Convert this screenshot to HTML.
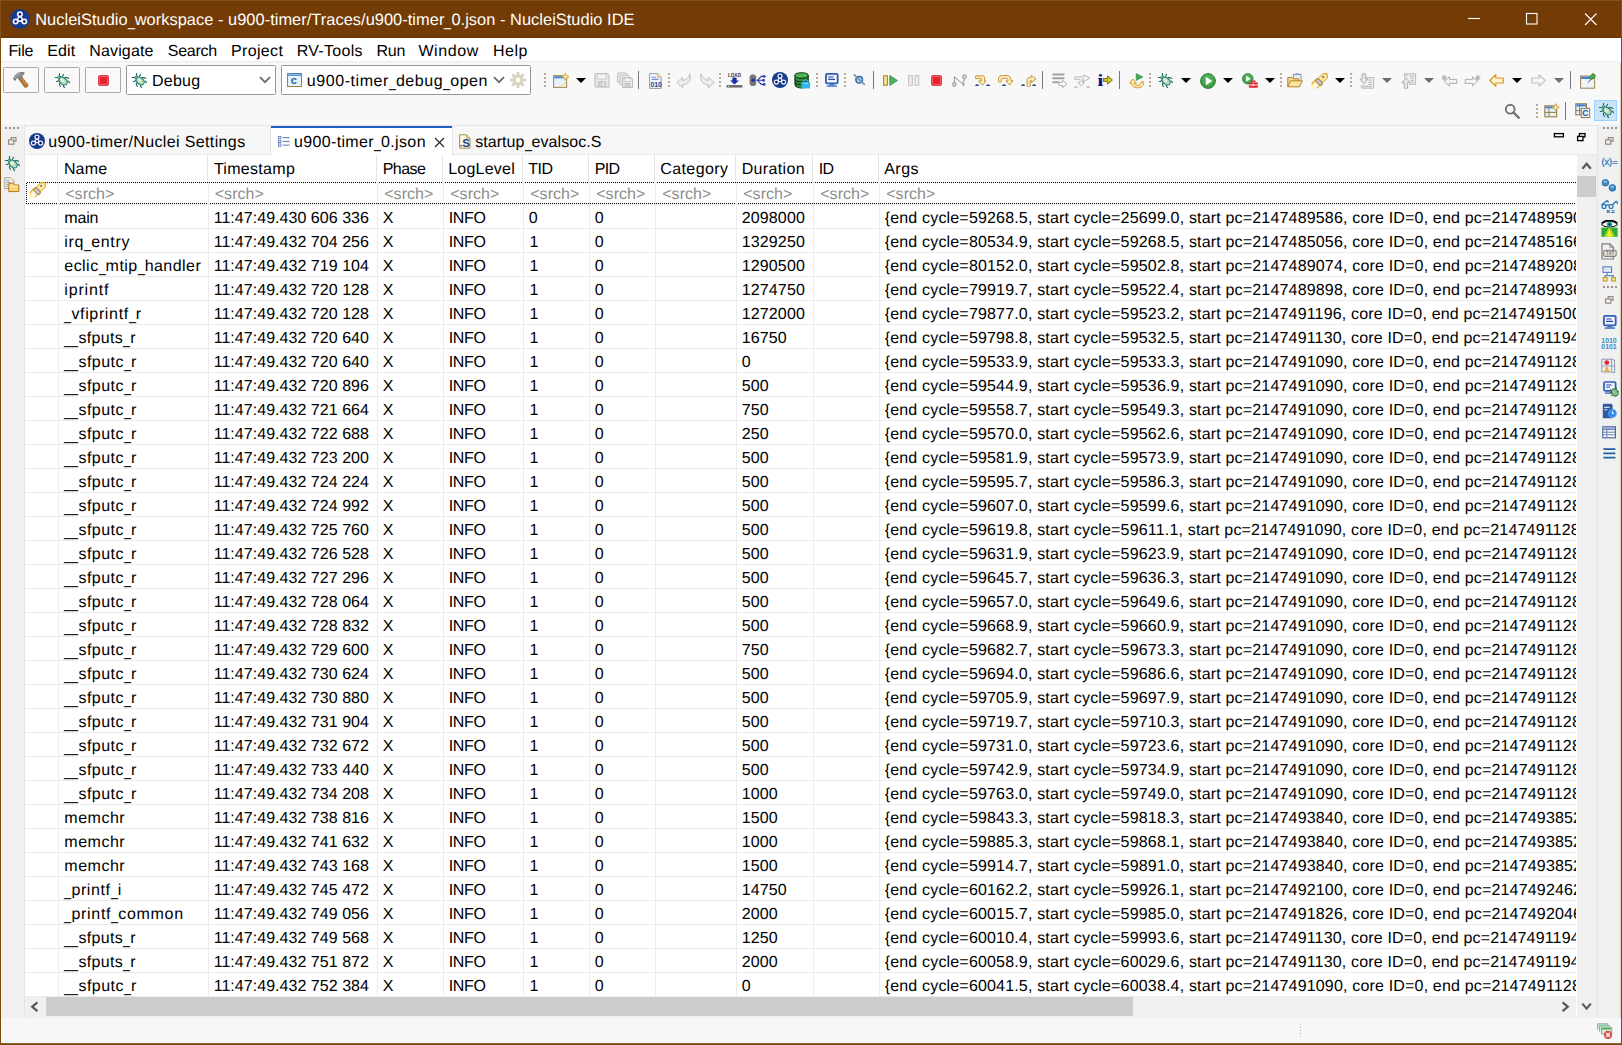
<!DOCTYPE html>
<html lang="en"><head><meta charset="utf-8"><title>NucleiStudio IDE</title>
<style>
html,body{margin:0;padding:0}
body{width:1622px;height:1045px;overflow:hidden;background:#7c4913;position:relative;
 font-family:"Liberation Sans",sans-serif;font-size:16px;color:#000}
div,span,svg{position:absolute;box-sizing:border-box}
.t{white-space:pre;line-height:24px;height:24px;font-size:16.0px;text-rendering:geometricPrecision}
.u{position:static;display:inline-block;letter-spacing:0;white-space:pre;transform-origin:0 0}
.w{color:#fff}
.g{color:#8d8d8d}
.row{left:25px;width:1551px;height:24px;overflow:hidden;border-bottom:1px solid #ececec}
.vl{top:0;width:1px;height:24px;background:#ececec}
.hs{top:155px;width:1px;height:26px;background:#e5e5e5}
.dd{width:0;height:0;border-left:5px solid transparent;border-right:5px solid transparent;border-top:5px solid #000}
.ddg{border-top-color:#6d6d6d}
.sepd{width:2px;height:15px;background:repeating-linear-gradient(180deg,#b8ac9a 0 2px,transparent 2px 4px)}
.sepl{width:1px;height:18px;background:#787878}
.btn{border:1px solid #a9a9a9;border-radius:1.5px;background:#f9f9f9}
.combo{border:1px solid #979797;border-radius:1.5px;background:#fff}
</style></head><body>

<div style="left:0;top:0;width:1622px;height:38px;background:#80521e"></div>
<div style="left:1px;top:1px;width:1620px;height:37px;background:#733c06"></div>
<div style="left:1px;top:38px;width:1620px;height:1006px;background:#f8f8f8"></div>
<div style="left:1px;top:37px;width:1620px;height:1px;background:#6b3504"></div>
<div style="left:1620px;top:38px;width:1px;height:1006px;background:#dccfc2"></div>
<div style="left:1px;top:1043px;width:1620px;height:1px;background:#8d6136"></div>
<span class="t w" style="left:35.2px;top:8.0px;letter-spacing:0.038px;font-size:16.4px;">NucleiStudio<span class="u" style="width:7.0px;transform:translateY(1.2px) scaleX(0.7671)">_</span>workspace - u900-timer/Traces/u900-timer<span class="u" style="width:7.0px;transform:translateY(1.2px) scaleX(0.7671)">_</span>0.json - NucleiStudio IDE</span>
<svg style="left:1460px;top:0" width="162" height="38" viewBox="0 0 162 38" fill="none" stroke="#fff" stroke-width="1.1"><path d="M8 18.5H20"/><rect x="66.5" y="13.5" width="10.5" height="10.5"/><path d="M125 13.5L136.5 25M136.5 13.5L125 25"/></svg>
<div style="left:1px;top:38px;width:1620px;height:23px;background:#fff"></div>
<div style="left:1px;top:61px;width:1620px;height:1px;background:#efefef"></div>
<div style="left:1px;top:62px;width:1620px;height:1px;background:#f4f4f4"></div>
<span class="t" style="left:8.4px;top:40.0px;letter-spacing:-0.295px;">File</span>
<span class="t" style="left:47.2px;top:40.0px;letter-spacing:0.18px;">Edit</span>
<span class="t" style="left:89.2px;top:40.0px;letter-spacing:0.168px;">Navigate</span>
<span class="t" style="left:167.7px;top:40.0px;letter-spacing:-0.234px;">Search</span>
<span class="t" style="left:231.0px;top:40.0px;letter-spacing:0.343px;">Project</span>
<span class="t" style="left:296.7px;top:40.0px;letter-spacing:0.308px;">RV-Tools</span>
<span class="t" style="left:376.6px;top:40.0px;letter-spacing:-0.32px;">Run</span>
<span class="t" style="left:418.4px;top:40.0px;letter-spacing:0.599px;">Window</span>
<span class="t" style="left:493.0px;top:40.0px;letter-spacing:0.498px;">Help</span>
<div class="btn" style="left:3px;top:67px;width:36px;height:26px"></div>
<div class="btn" style="left:44px;top:67px;width:36px;height:26px"></div>
<div class="btn" style="left:85px;top:67px;width:36px;height:26px"></div>
<div class="combo" style="left:126px;top:65px;width:150px;height:30px"></div>
<div class="combo" style="left:281px;top:65px;width:250px;height:30px"></div>
<span class="t" style="left:151.9px;top:70.0px;letter-spacing:0.289px;">Debug</span>
<span class="t" style="left:306.8px;top:70.0px;letter-spacing:0.561px;">u900-timer<span class="u" style="width:7.0px;transform:translateY(1.2px) scaleX(0.786)">_</span>debug<span class="u" style="width:7.0px;transform:translateY(1.2px) scaleX(0.786)">_</span>open</span>
<svg style="left:259px;top:76px" width="12" height="8" viewBox="0 0 12 8" fill="none" stroke="#6a6a6a" stroke-width="1.7"><path d="M1 1.2L6 6.2L11 1.2"/></svg>
<svg style="left:493px;top:76px" width="12" height="8" viewBox="0 0 12 8" fill="none" stroke="#6a6a6a" stroke-width="1.7"><path d="M1 1.2L6 6.2L11 1.2"/></svg>
<div class="sepd" style="left:544px;top:73px"></div>
<div class="sepd" style="left:668px;top:73px"></div>
<div class="sepd" style="left:719px;top:73px"></div>
<div class="sepd" style="left:816px;top:73px"></div>
<div class="sepd" style="left:844px;top:73px"></div>
<div class="sepd" style="left:1149px;top:73px"></div>
<div class="sepd" style="left:1280px;top:73px"></div>
<div class="sepd" style="left:1350px;top:73px"></div>
<div class="sepd" style="left:1536px;top:104px"></div>
<div class="sepl" style="left:638px;top:71px"></div>
<div class="sepl" style="left:873px;top:71px"></div>
<div class="sepl" style="left:1042px;top:71px"></div>
<div class="sepl" style="left:1119px;top:71px"></div>
<div class="sepl" style="left:1570px;top:71px"></div>
<div class="sepl" style="left:1565px;top:102px"></div>
<div class="dd" style="left:576px;top:78px"></div>
<div class="dd" style="left:1181px;top:78px"></div>
<div class="dd" style="left:1223px;top:78px"></div>
<div class="dd" style="left:1265px;top:78px"></div>
<div class="dd" style="left:1335px;top:78px"></div>
<div class="dd" style="left:1512px;top:78px"></div>
<div class="dd ddg" style="left:1382px;top:78px"></div>
<div class="dd ddg" style="left:1424px;top:78px"></div>
<div class="dd ddg" style="left:1554px;top:78px"></div>
<div style="left:1594px;top:100px;width:23px;height:21px;background:#cce4f7;border:1px solid #99d1ff"></div>
<div style="left:1px;top:125px;width:23px;height:893px;background:#f0f0f0"></div>
<div style="left:1598px;top:125px;width:22px;height:893px;background:#f0f0f0"></div>
<div style="left:24px;top:125px;width:1574px;height:893px;background:#f7f7f7;border:1px solid #e4e4e4"></div>
<div style="left:26px;top:154px;width:1571px;height:1px;background:#e9e9e9"></div>
<div style="left:270px;top:126px;width:183px;height:29px;background:#fff;border-left:1px solid #e4e4e4;border-right:1px solid #e4e4e4"></div>
<div style="left:271px;top:126px;width:181px;height:2px;background:#2360c2"></div>
<span class="t" style="left:48.2px;top:131.0px;letter-spacing:0.372px;">u900-timer/Nuclei Settings</span>
<span class="t" style="left:293.9px;top:131.0px;letter-spacing:0.364px;">u900-timer<span class="u" style="width:7.0px;transform:translateY(1.2px) scaleX(0.786)">_</span>0.json</span>
<span class="t" style="left:475.2px;top:131.0px;letter-spacing:0.064px;">startup<span class="u" style="width:7.0px;transform:translateY(1.2px) scaleX(0.786)">_</span>evalsoc.S</span>
<svg style="left:434px;top:137px" width="11" height="11" viewBox="0 0 11 11" fill="none" stroke="#222" stroke-width="1.1"><path d="M1 1L10 10M10 1L1 10"/></svg>
<svg style="left:1553px;top:132px" width="34" height="11" viewBox="0 0 34 11" fill="none" stroke="#000" stroke-width="1.3"><rect x="1.4" y="1.6" width="9" height="3.2"/><rect x="26.4" y="1.6" width="5.6" height="3.4"/><rect x="24.6" y="4.4" width="5.4" height="4.2" fill="#f7f7f7"/></svg>
<div style="left:25px;top:155px;width:1552px;height:842px;background:#fff"></div>
<div class="hs" style="left:57px"></div>
<div class="hs" style="left:207px"></div>
<div class="hs" style="left:376px"></div>
<div class="hs" style="left:442px"></div>
<div class="hs" style="left:522px"></div>
<div class="hs" style="left:588px"></div>
<div class="hs" style="left:654px"></div>
<div class="hs" style="left:735px"></div>
<div class="hs" style="left:812px"></div>
<div class="hs" style="left:878px"></div>
<span class="t" style="left:63.9px;top:158.0px;letter-spacing:0.153px;">Name</span>
<span class="t" style="left:213.9px;top:158.0px;letter-spacing:0.297px;">Timestamp</span>
<span class="t" style="left:382.7px;top:158.0px;letter-spacing:-0.515px;">Phase</span>
<span class="t" style="left:448.2px;top:158.0px;letter-spacing:0.231px;">LogLevel</span>
<span class="t" style="left:528.2px;top:158.0px;letter-spacing:-0.494px;">TID</span>
<span class="t" style="left:594.7px;top:158.0px;letter-spacing:-0.624px;">PID</span>
<span class="t" style="left:660.2px;top:158.0px;letter-spacing:0.422px;">Category</span>
<span class="t" style="left:741.7px;top:158.0px;letter-spacing:0.352px;">Duration</span>
<span class="t" style="left:818.7px;top:158.0px;letter-spacing:-0.6px;">ID</span>
<span class="t" style="left:884.2px;top:158.0px;letter-spacing:0.473px;">Args</span>
<span class="t g" style="left:65.2px;top:183.0px;letter-spacing:0.063px;">&lt;srch&gt;</span>
<span class="t g" style="left:214.7px;top:183.0px;letter-spacing:0.063px;">&lt;srch&gt;</span>
<span class="t g" style="left:384.2px;top:183.0px;letter-spacing:0.063px;">&lt;srch&gt;</span>
<span class="t g" style="left:450.2px;top:183.0px;letter-spacing:0.063px;">&lt;srch&gt;</span>
<span class="t g" style="left:530.2px;top:183.0px;letter-spacing:0.063px;">&lt;srch&gt;</span>
<span class="t g" style="left:596.2px;top:183.0px;letter-spacing:0.063px;">&lt;srch&gt;</span>
<span class="t g" style="left:662.2px;top:183.0px;letter-spacing:0.063px;">&lt;srch&gt;</span>
<span class="t g" style="left:743.2px;top:183.0px;letter-spacing:0.063px;">&lt;srch&gt;</span>
<span class="t g" style="left:820.2px;top:183.0px;letter-spacing:0.063px;">&lt;srch&gt;</span>
<span class="t g" style="left:886.2px;top:183.0px;letter-spacing:0.063px;">&lt;srch&gt;</span>
<div style="left:27px;top:182px;width:1549px;height:1px;background:repeating-linear-gradient(90deg,#000 0 1px,transparent 1px 2px)"></div>
<div style="left:26px;top:203px;width:1550px;height:1px;background:repeating-linear-gradient(90deg,#000 0 1px,transparent 1px 2px)"></div>
<div style="left:26px;top:183px;width:1px;height:21px;background:repeating-linear-gradient(180deg,#000 0 1px,transparent 1px 2px)"></div>
<div style="left:58px;top:182px;width:1px;height:23px;background:#ececec"></div>
<div style="left:208px;top:182px;width:1px;height:23px;background:#ececec"></div>
<div style="left:377px;top:182px;width:1px;height:23px;background:#ececec"></div>
<div style="left:443px;top:182px;width:1px;height:23px;background:#ececec"></div>
<div style="left:523px;top:182px;width:1px;height:23px;background:#ececec"></div>
<div style="left:589px;top:182px;width:1px;height:23px;background:#ececec"></div>
<div style="left:655px;top:182px;width:1px;height:23px;background:#ececec"></div>
<div style="left:736px;top:182px;width:1px;height:23px;background:#ececec"></div>
<div style="left:813px;top:182px;width:1px;height:23px;background:#ececec"></div>
<div style="left:879px;top:182px;width:1px;height:23px;background:#ececec"></div>
<div style="left:25px;top:204px;width:1552px;height:1px;background:#ececec"></div>
<div class="row" style="top:205px"><div class="vl" style="left:33px"></div><div class="vl" style="left:183px"></div><div class="vl" style="left:352px"></div><div class="vl" style="left:418px"></div><div class="vl" style="left:498px"></div><div class="vl" style="left:564px"></div><div class="vl" style="left:630px"></div><div class="vl" style="left:711px"></div><div class="vl" style="left:788px"></div><div class="vl" style="left:854px"></div><span class="t" style="left:39.3px;top:2.0px;letter-spacing:-0.197px">main</span><span class="t" style="left:188.7px;top:2.0px;letter-spacing:0.039px">11:47:49.430 606 336</span><span class="t" style="left:357.8px;top:2.0px;">X</span><span class="t" style="left:423.8px;top:2.0px;letter-spacing:-0.38px">INFO</span><span class="t" style="left:503.8px;top:2.0px;">0</span><span class="t" style="left:569.8px;top:2.0px;">0</span><span class="t" style="left:716.7px;top:2.0px;letter-spacing:0.143px">2098000</span><span class="t" style="left:859.7px;top:2.0px;letter-spacing:0.174px">{end cycle=59268.5, start cycle=25699.0, start pc=2147489586, core ID=0, end pc=2147489590, func=0}</span></div>
<div class="row" style="top:229px"><div class="vl" style="left:33px"></div><div class="vl" style="left:183px"></div><div class="vl" style="left:352px"></div><div class="vl" style="left:418px"></div><div class="vl" style="left:498px"></div><div class="vl" style="left:564px"></div><div class="vl" style="left:630px"></div><div class="vl" style="left:711px"></div><div class="vl" style="left:788px"></div><div class="vl" style="left:854px"></div><span class="t" style="left:39.3px;top:2.0px;letter-spacing:0.695px">irq<span class="u" style="width:7.0px;transform:translateY(1.2px) scaleX(0.786)">_</span>entry</span><span class="t" style="left:188.7px;top:2.0px;letter-spacing:0.039px">11:47:49.432 704 256</span><span class="t" style="left:357.8px;top:2.0px;">X</span><span class="t" style="left:423.8px;top:2.0px;letter-spacing:-0.38px">INFO</span><span class="t" style="left:504.6px;top:2.0px;">1</span><span class="t" style="left:569.8px;top:2.0px;">0</span><span class="t" style="left:716.7px;top:2.0px;letter-spacing:0.143px">1329250</span><span class="t" style="left:859.7px;top:2.0px;letter-spacing:0.174px">{end cycle=80534.9, start cycle=59268.5, start pc=2147485056, core ID=0, end pc=2147485166, func=0}</span></div>
<div class="row" style="top:253px"><div class="vl" style="left:33px"></div><div class="vl" style="left:183px"></div><div class="vl" style="left:352px"></div><div class="vl" style="left:418px"></div><div class="vl" style="left:498px"></div><div class="vl" style="left:564px"></div><div class="vl" style="left:630px"></div><div class="vl" style="left:711px"></div><div class="vl" style="left:788px"></div><div class="vl" style="left:854px"></div><span class="t" style="left:39.3px;top:2.0px;letter-spacing:0.457px">eclic<span class="u" style="width:7.0px;transform:translateY(1.2px) scaleX(0.786)">_</span>mtip<span class="u" style="width:7.0px;transform:translateY(1.2px) scaleX(0.786)">_</span>handler</span><span class="t" style="left:188.7px;top:2.0px;letter-spacing:0.039px">11:47:49.432 719 104</span><span class="t" style="left:357.8px;top:2.0px;">X</span><span class="t" style="left:423.8px;top:2.0px;letter-spacing:-0.38px">INFO</span><span class="t" style="left:504.6px;top:2.0px;">1</span><span class="t" style="left:569.8px;top:2.0px;">0</span><span class="t" style="left:716.7px;top:2.0px;letter-spacing:0.143px">1290500</span><span class="t" style="left:859.7px;top:2.0px;letter-spacing:0.174px">{end cycle=80152.0, start cycle=59502.8, start pc=2147489074, core ID=0, end pc=2147489208, func=0}</span></div>
<div class="row" style="top:277px"><div class="vl" style="left:33px"></div><div class="vl" style="left:183px"></div><div class="vl" style="left:352px"></div><div class="vl" style="left:418px"></div><div class="vl" style="left:498px"></div><div class="vl" style="left:564px"></div><div class="vl" style="left:630px"></div><div class="vl" style="left:711px"></div><div class="vl" style="left:788px"></div><div class="vl" style="left:854px"></div><span class="t" style="left:39.3px;top:2.0px;letter-spacing:0.825px">iprintf</span><span class="t" style="left:188.7px;top:2.0px;letter-spacing:0.039px">11:47:49.432 720 128</span><span class="t" style="left:357.8px;top:2.0px;">X</span><span class="t" style="left:423.8px;top:2.0px;letter-spacing:-0.38px">INFO</span><span class="t" style="left:504.6px;top:2.0px;">1</span><span class="t" style="left:569.8px;top:2.0px;">0</span><span class="t" style="left:716.7px;top:2.0px;letter-spacing:0.143px">1274750</span><span class="t" style="left:859.7px;top:2.0px;letter-spacing:0.174px">{end cycle=79919.7, start cycle=59522.4, start pc=2147489898, core ID=0, end pc=2147489936, func=0}</span></div>
<div class="row" style="top:301px"><div class="vl" style="left:33px"></div><div class="vl" style="left:183px"></div><div class="vl" style="left:352px"></div><div class="vl" style="left:418px"></div><div class="vl" style="left:498px"></div><div class="vl" style="left:564px"></div><div class="vl" style="left:630px"></div><div class="vl" style="left:711px"></div><div class="vl" style="left:788px"></div><div class="vl" style="left:854px"></div><span class="t" style="left:39.4px;top:2.0px;letter-spacing:0.651px"><span class="u" style="width:7.0px;transform:translateY(1.2px) scaleX(0.786)">_</span>vfiprintf<span class="u" style="width:7.0px;transform:translateY(1.2px) scaleX(0.786)">_</span>r</span><span class="t" style="left:188.7px;top:2.0px;letter-spacing:0.039px">11:47:49.432 720 128</span><span class="t" style="left:357.8px;top:2.0px;">X</span><span class="t" style="left:423.8px;top:2.0px;letter-spacing:-0.38px">INFO</span><span class="t" style="left:504.6px;top:2.0px;">1</span><span class="t" style="left:569.8px;top:2.0px;">0</span><span class="t" style="left:716.7px;top:2.0px;letter-spacing:0.143px">1272000</span><span class="t" style="left:859.7px;top:2.0px;letter-spacing:0.174px">{end cycle=79877.0, start cycle=59523.2, start pc=2147491196, core ID=0, end pc=2147491500, func=0}</span></div>
<div class="row" style="top:325px"><div class="vl" style="left:33px"></div><div class="vl" style="left:183px"></div><div class="vl" style="left:352px"></div><div class="vl" style="left:418px"></div><div class="vl" style="left:498px"></div><div class="vl" style="left:564px"></div><div class="vl" style="left:630px"></div><div class="vl" style="left:711px"></div><div class="vl" style="left:788px"></div><div class="vl" style="left:854px"></div><span class="t" style="left:39.4px;top:2.0px;letter-spacing:0.343px"><span class="u" style="width:14.0px;transform:translateY(1.2px) scaleX(0.786)">__</span>sfputs<span class="u" style="width:7.0px;transform:translateY(1.2px) scaleX(0.786)">_</span>r</span><span class="t" style="left:188.7px;top:2.0px;letter-spacing:0.039px">11:47:49.432 720 640</span><span class="t" style="left:357.8px;top:2.0px;">X</span><span class="t" style="left:423.8px;top:2.0px;letter-spacing:-0.38px">INFO</span><span class="t" style="left:504.6px;top:2.0px;">1</span><span class="t" style="left:569.8px;top:2.0px;">0</span><span class="t" style="left:716.7px;top:2.0px;letter-spacing:0.143px">16750</span><span class="t" style="left:859.7px;top:2.0px;letter-spacing:0.174px">{end cycle=59798.8, start cycle=59532.5, start pc=2147491130, core ID=0, end pc=2147491194, func=0}</span></div>
<div class="row" style="top:349px"><div class="vl" style="left:33px"></div><div class="vl" style="left:183px"></div><div class="vl" style="left:352px"></div><div class="vl" style="left:418px"></div><div class="vl" style="left:498px"></div><div class="vl" style="left:564px"></div><div class="vl" style="left:630px"></div><div class="vl" style="left:711px"></div><div class="vl" style="left:788px"></div><div class="vl" style="left:854px"></div><span class="t" style="left:39.4px;top:2.0px;letter-spacing:0.486px"><span class="u" style="width:14.0px;transform:translateY(1.2px) scaleX(0.786)">__</span>sfputc<span class="u" style="width:7.0px;transform:translateY(1.2px) scaleX(0.786)">_</span>r</span><span class="t" style="left:188.7px;top:2.0px;letter-spacing:0.039px">11:47:49.432 720 640</span><span class="t" style="left:357.8px;top:2.0px;">X</span><span class="t" style="left:423.8px;top:2.0px;letter-spacing:-0.38px">INFO</span><span class="t" style="left:504.6px;top:2.0px;">1</span><span class="t" style="left:569.8px;top:2.0px;">0</span><span class="t" style="left:716.7px;top:2.0px;letter-spacing:0.143px">0</span><span class="t" style="left:859.7px;top:2.0px;letter-spacing:0.174px">{end cycle=59533.9, start cycle=59533.3, start pc=2147491090, core ID=0, end pc=2147491128, func=0}</span></div>
<div class="row" style="top:373px"><div class="vl" style="left:33px"></div><div class="vl" style="left:183px"></div><div class="vl" style="left:352px"></div><div class="vl" style="left:418px"></div><div class="vl" style="left:498px"></div><div class="vl" style="left:564px"></div><div class="vl" style="left:630px"></div><div class="vl" style="left:711px"></div><div class="vl" style="left:788px"></div><div class="vl" style="left:854px"></div><span class="t" style="left:39.4px;top:2.0px;letter-spacing:0.486px"><span class="u" style="width:14.0px;transform:translateY(1.2px) scaleX(0.786)">__</span>sfputc<span class="u" style="width:7.0px;transform:translateY(1.2px) scaleX(0.786)">_</span>r</span><span class="t" style="left:188.7px;top:2.0px;letter-spacing:0.039px">11:47:49.432 720 896</span><span class="t" style="left:357.8px;top:2.0px;">X</span><span class="t" style="left:423.8px;top:2.0px;letter-spacing:-0.38px">INFO</span><span class="t" style="left:504.6px;top:2.0px;">1</span><span class="t" style="left:569.8px;top:2.0px;">0</span><span class="t" style="left:716.7px;top:2.0px;letter-spacing:0.143px">500</span><span class="t" style="left:859.7px;top:2.0px;letter-spacing:0.174px">{end cycle=59544.9, start cycle=59536.9, start pc=2147491090, core ID=0, end pc=2147491128, func=0}</span></div>
<div class="row" style="top:397px"><div class="vl" style="left:33px"></div><div class="vl" style="left:183px"></div><div class="vl" style="left:352px"></div><div class="vl" style="left:418px"></div><div class="vl" style="left:498px"></div><div class="vl" style="left:564px"></div><div class="vl" style="left:630px"></div><div class="vl" style="left:711px"></div><div class="vl" style="left:788px"></div><div class="vl" style="left:854px"></div><span class="t" style="left:39.4px;top:2.0px;letter-spacing:0.486px"><span class="u" style="width:14.0px;transform:translateY(1.2px) scaleX(0.786)">__</span>sfputc<span class="u" style="width:7.0px;transform:translateY(1.2px) scaleX(0.786)">_</span>r</span><span class="t" style="left:188.7px;top:2.0px;letter-spacing:0.039px">11:47:49.432 721 664</span><span class="t" style="left:357.8px;top:2.0px;">X</span><span class="t" style="left:423.8px;top:2.0px;letter-spacing:-0.38px">INFO</span><span class="t" style="left:504.6px;top:2.0px;">1</span><span class="t" style="left:569.8px;top:2.0px;">0</span><span class="t" style="left:716.7px;top:2.0px;letter-spacing:0.143px">750</span><span class="t" style="left:859.7px;top:2.0px;letter-spacing:0.174px">{end cycle=59558.7, start cycle=59549.3, start pc=2147491090, core ID=0, end pc=2147491128, func=0}</span></div>
<div class="row" style="top:421px"><div class="vl" style="left:33px"></div><div class="vl" style="left:183px"></div><div class="vl" style="left:352px"></div><div class="vl" style="left:418px"></div><div class="vl" style="left:498px"></div><div class="vl" style="left:564px"></div><div class="vl" style="left:630px"></div><div class="vl" style="left:711px"></div><div class="vl" style="left:788px"></div><div class="vl" style="left:854px"></div><span class="t" style="left:39.4px;top:2.0px;letter-spacing:0.486px"><span class="u" style="width:14.0px;transform:translateY(1.2px) scaleX(0.786)">__</span>sfputc<span class="u" style="width:7.0px;transform:translateY(1.2px) scaleX(0.786)">_</span>r</span><span class="t" style="left:188.7px;top:2.0px;letter-spacing:0.039px">11:47:49.432 722 688</span><span class="t" style="left:357.8px;top:2.0px;">X</span><span class="t" style="left:423.8px;top:2.0px;letter-spacing:-0.38px">INFO</span><span class="t" style="left:504.6px;top:2.0px;">1</span><span class="t" style="left:569.8px;top:2.0px;">0</span><span class="t" style="left:716.7px;top:2.0px;letter-spacing:0.143px">250</span><span class="t" style="left:859.7px;top:2.0px;letter-spacing:0.174px">{end cycle=59570.0, start cycle=59562.6, start pc=2147491090, core ID=0, end pc=2147491128, func=0}</span></div>
<div class="row" style="top:445px"><div class="vl" style="left:33px"></div><div class="vl" style="left:183px"></div><div class="vl" style="left:352px"></div><div class="vl" style="left:418px"></div><div class="vl" style="left:498px"></div><div class="vl" style="left:564px"></div><div class="vl" style="left:630px"></div><div class="vl" style="left:711px"></div><div class="vl" style="left:788px"></div><div class="vl" style="left:854px"></div><span class="t" style="left:39.4px;top:2.0px;letter-spacing:0.486px"><span class="u" style="width:14.0px;transform:translateY(1.2px) scaleX(0.786)">__</span>sfputc<span class="u" style="width:7.0px;transform:translateY(1.2px) scaleX(0.786)">_</span>r</span><span class="t" style="left:188.7px;top:2.0px;letter-spacing:0.039px">11:47:49.432 723 200</span><span class="t" style="left:357.8px;top:2.0px;">X</span><span class="t" style="left:423.8px;top:2.0px;letter-spacing:-0.38px">INFO</span><span class="t" style="left:504.6px;top:2.0px;">1</span><span class="t" style="left:569.8px;top:2.0px;">0</span><span class="t" style="left:716.7px;top:2.0px;letter-spacing:0.143px">500</span><span class="t" style="left:859.7px;top:2.0px;letter-spacing:0.174px">{end cycle=59581.9, start cycle=59573.9, start pc=2147491090, core ID=0, end pc=2147491128, func=0}</span></div>
<div class="row" style="top:469px"><div class="vl" style="left:33px"></div><div class="vl" style="left:183px"></div><div class="vl" style="left:352px"></div><div class="vl" style="left:418px"></div><div class="vl" style="left:498px"></div><div class="vl" style="left:564px"></div><div class="vl" style="left:630px"></div><div class="vl" style="left:711px"></div><div class="vl" style="left:788px"></div><div class="vl" style="left:854px"></div><span class="t" style="left:39.4px;top:2.0px;letter-spacing:0.486px"><span class="u" style="width:14.0px;transform:translateY(1.2px) scaleX(0.786)">__</span>sfputc<span class="u" style="width:7.0px;transform:translateY(1.2px) scaleX(0.786)">_</span>r</span><span class="t" style="left:188.7px;top:2.0px;letter-spacing:0.039px">11:47:49.432 724 224</span><span class="t" style="left:357.8px;top:2.0px;">X</span><span class="t" style="left:423.8px;top:2.0px;letter-spacing:-0.38px">INFO</span><span class="t" style="left:504.6px;top:2.0px;">1</span><span class="t" style="left:569.8px;top:2.0px;">0</span><span class="t" style="left:716.7px;top:2.0px;letter-spacing:0.143px">500</span><span class="t" style="left:859.7px;top:2.0px;letter-spacing:0.174px">{end cycle=59595.7, start cycle=59586.3, start pc=2147491090, core ID=0, end pc=2147491128, func=0}</span></div>
<div class="row" style="top:493px"><div class="vl" style="left:33px"></div><div class="vl" style="left:183px"></div><div class="vl" style="left:352px"></div><div class="vl" style="left:418px"></div><div class="vl" style="left:498px"></div><div class="vl" style="left:564px"></div><div class="vl" style="left:630px"></div><div class="vl" style="left:711px"></div><div class="vl" style="left:788px"></div><div class="vl" style="left:854px"></div><span class="t" style="left:39.4px;top:2.0px;letter-spacing:0.486px"><span class="u" style="width:14.0px;transform:translateY(1.2px) scaleX(0.786)">__</span>sfputc<span class="u" style="width:7.0px;transform:translateY(1.2px) scaleX(0.786)">_</span>r</span><span class="t" style="left:188.7px;top:2.0px;letter-spacing:0.039px">11:47:49.432 724 992</span><span class="t" style="left:357.8px;top:2.0px;">X</span><span class="t" style="left:423.8px;top:2.0px;letter-spacing:-0.38px">INFO</span><span class="t" style="left:504.6px;top:2.0px;">1</span><span class="t" style="left:569.8px;top:2.0px;">0</span><span class="t" style="left:716.7px;top:2.0px;letter-spacing:0.143px">500</span><span class="t" style="left:859.7px;top:2.0px;letter-spacing:0.174px">{end cycle=59607.0, start cycle=59599.6, start pc=2147491090, core ID=0, end pc=2147491128, func=0}</span></div>
<div class="row" style="top:517px"><div class="vl" style="left:33px"></div><div class="vl" style="left:183px"></div><div class="vl" style="left:352px"></div><div class="vl" style="left:418px"></div><div class="vl" style="left:498px"></div><div class="vl" style="left:564px"></div><div class="vl" style="left:630px"></div><div class="vl" style="left:711px"></div><div class="vl" style="left:788px"></div><div class="vl" style="left:854px"></div><span class="t" style="left:39.4px;top:2.0px;letter-spacing:0.486px"><span class="u" style="width:14.0px;transform:translateY(1.2px) scaleX(0.786)">__</span>sfputc<span class="u" style="width:7.0px;transform:translateY(1.2px) scaleX(0.786)">_</span>r</span><span class="t" style="left:188.7px;top:2.0px;letter-spacing:0.039px">11:47:49.432 725 760</span><span class="t" style="left:357.8px;top:2.0px;">X</span><span class="t" style="left:423.8px;top:2.0px;letter-spacing:-0.38px">INFO</span><span class="t" style="left:504.6px;top:2.0px;">1</span><span class="t" style="left:569.8px;top:2.0px;">0</span><span class="t" style="left:716.7px;top:2.0px;letter-spacing:0.143px">500</span><span class="t" style="left:859.7px;top:2.0px;letter-spacing:0.174px">{end cycle=59619.8, start cycle=59611.1, start pc=2147491090, core ID=0, end pc=2147491128, func=0}</span></div>
<div class="row" style="top:541px"><div class="vl" style="left:33px"></div><div class="vl" style="left:183px"></div><div class="vl" style="left:352px"></div><div class="vl" style="left:418px"></div><div class="vl" style="left:498px"></div><div class="vl" style="left:564px"></div><div class="vl" style="left:630px"></div><div class="vl" style="left:711px"></div><div class="vl" style="left:788px"></div><div class="vl" style="left:854px"></div><span class="t" style="left:39.4px;top:2.0px;letter-spacing:0.486px"><span class="u" style="width:14.0px;transform:translateY(1.2px) scaleX(0.786)">__</span>sfputc<span class="u" style="width:7.0px;transform:translateY(1.2px) scaleX(0.786)">_</span>r</span><span class="t" style="left:188.7px;top:2.0px;letter-spacing:0.039px">11:47:49.432 726 528</span><span class="t" style="left:357.8px;top:2.0px;">X</span><span class="t" style="left:423.8px;top:2.0px;letter-spacing:-0.38px">INFO</span><span class="t" style="left:504.6px;top:2.0px;">1</span><span class="t" style="left:569.8px;top:2.0px;">0</span><span class="t" style="left:716.7px;top:2.0px;letter-spacing:0.143px">500</span><span class="t" style="left:859.7px;top:2.0px;letter-spacing:0.174px">{end cycle=59631.9, start cycle=59623.9, start pc=2147491090, core ID=0, end pc=2147491128, func=0}</span></div>
<div class="row" style="top:565px"><div class="vl" style="left:33px"></div><div class="vl" style="left:183px"></div><div class="vl" style="left:352px"></div><div class="vl" style="left:418px"></div><div class="vl" style="left:498px"></div><div class="vl" style="left:564px"></div><div class="vl" style="left:630px"></div><div class="vl" style="left:711px"></div><div class="vl" style="left:788px"></div><div class="vl" style="left:854px"></div><span class="t" style="left:39.4px;top:2.0px;letter-spacing:0.486px"><span class="u" style="width:14.0px;transform:translateY(1.2px) scaleX(0.786)">__</span>sfputc<span class="u" style="width:7.0px;transform:translateY(1.2px) scaleX(0.786)">_</span>r</span><span class="t" style="left:188.7px;top:2.0px;letter-spacing:0.039px">11:47:49.432 727 296</span><span class="t" style="left:357.8px;top:2.0px;">X</span><span class="t" style="left:423.8px;top:2.0px;letter-spacing:-0.38px">INFO</span><span class="t" style="left:504.6px;top:2.0px;">1</span><span class="t" style="left:569.8px;top:2.0px;">0</span><span class="t" style="left:716.7px;top:2.0px;letter-spacing:0.143px">500</span><span class="t" style="left:859.7px;top:2.0px;letter-spacing:0.174px">{end cycle=59645.7, start cycle=59636.3, start pc=2147491090, core ID=0, end pc=2147491128, func=0}</span></div>
<div class="row" style="top:589px"><div class="vl" style="left:33px"></div><div class="vl" style="left:183px"></div><div class="vl" style="left:352px"></div><div class="vl" style="left:418px"></div><div class="vl" style="left:498px"></div><div class="vl" style="left:564px"></div><div class="vl" style="left:630px"></div><div class="vl" style="left:711px"></div><div class="vl" style="left:788px"></div><div class="vl" style="left:854px"></div><span class="t" style="left:39.4px;top:2.0px;letter-spacing:0.486px"><span class="u" style="width:14.0px;transform:translateY(1.2px) scaleX(0.786)">__</span>sfputc<span class="u" style="width:7.0px;transform:translateY(1.2px) scaleX(0.786)">_</span>r</span><span class="t" style="left:188.7px;top:2.0px;letter-spacing:0.039px">11:47:49.432 728 064</span><span class="t" style="left:357.8px;top:2.0px;">X</span><span class="t" style="left:423.8px;top:2.0px;letter-spacing:-0.38px">INFO</span><span class="t" style="left:504.6px;top:2.0px;">1</span><span class="t" style="left:569.8px;top:2.0px;">0</span><span class="t" style="left:716.7px;top:2.0px;letter-spacing:0.143px">500</span><span class="t" style="left:859.7px;top:2.0px;letter-spacing:0.174px">{end cycle=59657.0, start cycle=59649.6, start pc=2147491090, core ID=0, end pc=2147491128, func=0}</span></div>
<div class="row" style="top:613px"><div class="vl" style="left:33px"></div><div class="vl" style="left:183px"></div><div class="vl" style="left:352px"></div><div class="vl" style="left:418px"></div><div class="vl" style="left:498px"></div><div class="vl" style="left:564px"></div><div class="vl" style="left:630px"></div><div class="vl" style="left:711px"></div><div class="vl" style="left:788px"></div><div class="vl" style="left:854px"></div><span class="t" style="left:39.4px;top:2.0px;letter-spacing:0.486px"><span class="u" style="width:14.0px;transform:translateY(1.2px) scaleX(0.786)">__</span>sfputc<span class="u" style="width:7.0px;transform:translateY(1.2px) scaleX(0.786)">_</span>r</span><span class="t" style="left:188.7px;top:2.0px;letter-spacing:0.039px">11:47:49.432 728 832</span><span class="t" style="left:357.8px;top:2.0px;">X</span><span class="t" style="left:423.8px;top:2.0px;letter-spacing:-0.38px">INFO</span><span class="t" style="left:504.6px;top:2.0px;">1</span><span class="t" style="left:569.8px;top:2.0px;">0</span><span class="t" style="left:716.7px;top:2.0px;letter-spacing:0.143px">500</span><span class="t" style="left:859.7px;top:2.0px;letter-spacing:0.174px">{end cycle=59668.9, start cycle=59660.9, start pc=2147491090, core ID=0, end pc=2147491128, func=0}</span></div>
<div class="row" style="top:637px"><div class="vl" style="left:33px"></div><div class="vl" style="left:183px"></div><div class="vl" style="left:352px"></div><div class="vl" style="left:418px"></div><div class="vl" style="left:498px"></div><div class="vl" style="left:564px"></div><div class="vl" style="left:630px"></div><div class="vl" style="left:711px"></div><div class="vl" style="left:788px"></div><div class="vl" style="left:854px"></div><span class="t" style="left:39.4px;top:2.0px;letter-spacing:0.486px"><span class="u" style="width:14.0px;transform:translateY(1.2px) scaleX(0.786)">__</span>sfputc<span class="u" style="width:7.0px;transform:translateY(1.2px) scaleX(0.786)">_</span>r</span><span class="t" style="left:188.7px;top:2.0px;letter-spacing:0.039px">11:47:49.432 729 600</span><span class="t" style="left:357.8px;top:2.0px;">X</span><span class="t" style="left:423.8px;top:2.0px;letter-spacing:-0.38px">INFO</span><span class="t" style="left:504.6px;top:2.0px;">1</span><span class="t" style="left:569.8px;top:2.0px;">0</span><span class="t" style="left:716.7px;top:2.0px;letter-spacing:0.143px">750</span><span class="t" style="left:859.7px;top:2.0px;letter-spacing:0.174px">{end cycle=59682.7, start cycle=59673.3, start pc=2147491090, core ID=0, end pc=2147491128, func=0}</span></div>
<div class="row" style="top:661px"><div class="vl" style="left:33px"></div><div class="vl" style="left:183px"></div><div class="vl" style="left:352px"></div><div class="vl" style="left:418px"></div><div class="vl" style="left:498px"></div><div class="vl" style="left:564px"></div><div class="vl" style="left:630px"></div><div class="vl" style="left:711px"></div><div class="vl" style="left:788px"></div><div class="vl" style="left:854px"></div><span class="t" style="left:39.4px;top:2.0px;letter-spacing:0.486px"><span class="u" style="width:14.0px;transform:translateY(1.2px) scaleX(0.786)">__</span>sfputc<span class="u" style="width:7.0px;transform:translateY(1.2px) scaleX(0.786)">_</span>r</span><span class="t" style="left:188.7px;top:2.0px;letter-spacing:0.039px">11:47:49.432 730 624</span><span class="t" style="left:357.8px;top:2.0px;">X</span><span class="t" style="left:423.8px;top:2.0px;letter-spacing:-0.38px">INFO</span><span class="t" style="left:504.6px;top:2.0px;">1</span><span class="t" style="left:569.8px;top:2.0px;">0</span><span class="t" style="left:716.7px;top:2.0px;letter-spacing:0.143px">500</span><span class="t" style="left:859.7px;top:2.0px;letter-spacing:0.174px">{end cycle=59694.0, start cycle=59686.6, start pc=2147491090, core ID=0, end pc=2147491128, func=0}</span></div>
<div class="row" style="top:685px"><div class="vl" style="left:33px"></div><div class="vl" style="left:183px"></div><div class="vl" style="left:352px"></div><div class="vl" style="left:418px"></div><div class="vl" style="left:498px"></div><div class="vl" style="left:564px"></div><div class="vl" style="left:630px"></div><div class="vl" style="left:711px"></div><div class="vl" style="left:788px"></div><div class="vl" style="left:854px"></div><span class="t" style="left:39.4px;top:2.0px;letter-spacing:0.486px"><span class="u" style="width:14.0px;transform:translateY(1.2px) scaleX(0.786)">__</span>sfputc<span class="u" style="width:7.0px;transform:translateY(1.2px) scaleX(0.786)">_</span>r</span><span class="t" style="left:188.7px;top:2.0px;letter-spacing:0.039px">11:47:49.432 730 880</span><span class="t" style="left:357.8px;top:2.0px;">X</span><span class="t" style="left:423.8px;top:2.0px;letter-spacing:-0.38px">INFO</span><span class="t" style="left:504.6px;top:2.0px;">1</span><span class="t" style="left:569.8px;top:2.0px;">0</span><span class="t" style="left:716.7px;top:2.0px;letter-spacing:0.143px">500</span><span class="t" style="left:859.7px;top:2.0px;letter-spacing:0.174px">{end cycle=59705.9, start cycle=59697.9, start pc=2147491090, core ID=0, end pc=2147491128, func=0}</span></div>
<div class="row" style="top:709px"><div class="vl" style="left:33px"></div><div class="vl" style="left:183px"></div><div class="vl" style="left:352px"></div><div class="vl" style="left:418px"></div><div class="vl" style="left:498px"></div><div class="vl" style="left:564px"></div><div class="vl" style="left:630px"></div><div class="vl" style="left:711px"></div><div class="vl" style="left:788px"></div><div class="vl" style="left:854px"></div><span class="t" style="left:39.4px;top:2.0px;letter-spacing:0.486px"><span class="u" style="width:14.0px;transform:translateY(1.2px) scaleX(0.786)">__</span>sfputc<span class="u" style="width:7.0px;transform:translateY(1.2px) scaleX(0.786)">_</span>r</span><span class="t" style="left:188.7px;top:2.0px;letter-spacing:0.039px">11:47:49.432 731 904</span><span class="t" style="left:357.8px;top:2.0px;">X</span><span class="t" style="left:423.8px;top:2.0px;letter-spacing:-0.38px">INFO</span><span class="t" style="left:504.6px;top:2.0px;">1</span><span class="t" style="left:569.8px;top:2.0px;">0</span><span class="t" style="left:716.7px;top:2.0px;letter-spacing:0.143px">500</span><span class="t" style="left:859.7px;top:2.0px;letter-spacing:0.174px">{end cycle=59719.7, start cycle=59710.3, start pc=2147491090, core ID=0, end pc=2147491128, func=0}</span></div>
<div class="row" style="top:733px"><div class="vl" style="left:33px"></div><div class="vl" style="left:183px"></div><div class="vl" style="left:352px"></div><div class="vl" style="left:418px"></div><div class="vl" style="left:498px"></div><div class="vl" style="left:564px"></div><div class="vl" style="left:630px"></div><div class="vl" style="left:711px"></div><div class="vl" style="left:788px"></div><div class="vl" style="left:854px"></div><span class="t" style="left:39.4px;top:2.0px;letter-spacing:0.486px"><span class="u" style="width:14.0px;transform:translateY(1.2px) scaleX(0.786)">__</span>sfputc<span class="u" style="width:7.0px;transform:translateY(1.2px) scaleX(0.786)">_</span>r</span><span class="t" style="left:188.7px;top:2.0px;letter-spacing:0.039px">11:47:49.432 732 672</span><span class="t" style="left:357.8px;top:2.0px;">X</span><span class="t" style="left:423.8px;top:2.0px;letter-spacing:-0.38px">INFO</span><span class="t" style="left:504.6px;top:2.0px;">1</span><span class="t" style="left:569.8px;top:2.0px;">0</span><span class="t" style="left:716.7px;top:2.0px;letter-spacing:0.143px">500</span><span class="t" style="left:859.7px;top:2.0px;letter-spacing:0.174px">{end cycle=59731.0, start cycle=59723.6, start pc=2147491090, core ID=0, end pc=2147491128, func=0}</span></div>
<div class="row" style="top:757px"><div class="vl" style="left:33px"></div><div class="vl" style="left:183px"></div><div class="vl" style="left:352px"></div><div class="vl" style="left:418px"></div><div class="vl" style="left:498px"></div><div class="vl" style="left:564px"></div><div class="vl" style="left:630px"></div><div class="vl" style="left:711px"></div><div class="vl" style="left:788px"></div><div class="vl" style="left:854px"></div><span class="t" style="left:39.4px;top:2.0px;letter-spacing:0.486px"><span class="u" style="width:14.0px;transform:translateY(1.2px) scaleX(0.786)">__</span>sfputc<span class="u" style="width:7.0px;transform:translateY(1.2px) scaleX(0.786)">_</span>r</span><span class="t" style="left:188.7px;top:2.0px;letter-spacing:0.039px">11:47:49.432 733 440</span><span class="t" style="left:357.8px;top:2.0px;">X</span><span class="t" style="left:423.8px;top:2.0px;letter-spacing:-0.38px">INFO</span><span class="t" style="left:504.6px;top:2.0px;">1</span><span class="t" style="left:569.8px;top:2.0px;">0</span><span class="t" style="left:716.7px;top:2.0px;letter-spacing:0.143px">500</span><span class="t" style="left:859.7px;top:2.0px;letter-spacing:0.174px">{end cycle=59742.9, start cycle=59734.9, start pc=2147491090, core ID=0, end pc=2147491128, func=0}</span></div>
<div class="row" style="top:781px"><div class="vl" style="left:33px"></div><div class="vl" style="left:183px"></div><div class="vl" style="left:352px"></div><div class="vl" style="left:418px"></div><div class="vl" style="left:498px"></div><div class="vl" style="left:564px"></div><div class="vl" style="left:630px"></div><div class="vl" style="left:711px"></div><div class="vl" style="left:788px"></div><div class="vl" style="left:854px"></div><span class="t" style="left:39.4px;top:2.0px;letter-spacing:0.486px"><span class="u" style="width:14.0px;transform:translateY(1.2px) scaleX(0.786)">__</span>sfputc<span class="u" style="width:7.0px;transform:translateY(1.2px) scaleX(0.786)">_</span>r</span><span class="t" style="left:188.7px;top:2.0px;letter-spacing:0.039px">11:47:49.432 734 208</span><span class="t" style="left:357.8px;top:2.0px;">X</span><span class="t" style="left:423.8px;top:2.0px;letter-spacing:-0.38px">INFO</span><span class="t" style="left:504.6px;top:2.0px;">1</span><span class="t" style="left:569.8px;top:2.0px;">0</span><span class="t" style="left:716.7px;top:2.0px;letter-spacing:0.143px">1000</span><span class="t" style="left:859.7px;top:2.0px;letter-spacing:0.174px">{end cycle=59763.0, start cycle=59749.0, start pc=2147491090, core ID=0, end pc=2147491128, func=0}</span></div>
<div class="row" style="top:805px"><div class="vl" style="left:33px"></div><div class="vl" style="left:183px"></div><div class="vl" style="left:352px"></div><div class="vl" style="left:418px"></div><div class="vl" style="left:498px"></div><div class="vl" style="left:564px"></div><div class="vl" style="left:630px"></div><div class="vl" style="left:711px"></div><div class="vl" style="left:788px"></div><div class="vl" style="left:854px"></div><span class="t" style="left:39.3px;top:2.0px;letter-spacing:0.52px">memchr</span><span class="t" style="left:188.7px;top:2.0px;letter-spacing:0.039px">11:47:49.432 738 816</span><span class="t" style="left:357.8px;top:2.0px;">X</span><span class="t" style="left:423.8px;top:2.0px;letter-spacing:-0.38px">INFO</span><span class="t" style="left:504.6px;top:2.0px;">1</span><span class="t" style="left:569.8px;top:2.0px;">0</span><span class="t" style="left:716.7px;top:2.0px;letter-spacing:0.143px">1500</span><span class="t" style="left:859.7px;top:2.0px;letter-spacing:0.174px">{end cycle=59843.3, start cycle=59818.3, start pc=2147493840, core ID=0, end pc=2147493852, func=0}</span></div>
<div class="row" style="top:829px"><div class="vl" style="left:33px"></div><div class="vl" style="left:183px"></div><div class="vl" style="left:352px"></div><div class="vl" style="left:418px"></div><div class="vl" style="left:498px"></div><div class="vl" style="left:564px"></div><div class="vl" style="left:630px"></div><div class="vl" style="left:711px"></div><div class="vl" style="left:788px"></div><div class="vl" style="left:854px"></div><span class="t" style="left:39.3px;top:2.0px;letter-spacing:0.52px">memchr</span><span class="t" style="left:188.7px;top:2.0px;letter-spacing:0.039px">11:47:49.432 741 632</span><span class="t" style="left:357.8px;top:2.0px;">X</span><span class="t" style="left:423.8px;top:2.0px;letter-spacing:-0.38px">INFO</span><span class="t" style="left:504.6px;top:2.0px;">1</span><span class="t" style="left:569.8px;top:2.0px;">0</span><span class="t" style="left:716.7px;top:2.0px;letter-spacing:0.143px">1000</span><span class="t" style="left:859.7px;top:2.0px;letter-spacing:0.174px">{end cycle=59885.3, start cycle=59868.1, start pc=2147493840, core ID=0, end pc=2147493852, func=0}</span></div>
<div class="row" style="top:853px"><div class="vl" style="left:33px"></div><div class="vl" style="left:183px"></div><div class="vl" style="left:352px"></div><div class="vl" style="left:418px"></div><div class="vl" style="left:498px"></div><div class="vl" style="left:564px"></div><div class="vl" style="left:630px"></div><div class="vl" style="left:711px"></div><div class="vl" style="left:788px"></div><div class="vl" style="left:854px"></div><span class="t" style="left:39.3px;top:2.0px;letter-spacing:0.52px">memchr</span><span class="t" style="left:188.7px;top:2.0px;letter-spacing:0.039px">11:47:49.432 743 168</span><span class="t" style="left:357.8px;top:2.0px;">X</span><span class="t" style="left:423.8px;top:2.0px;letter-spacing:-0.38px">INFO</span><span class="t" style="left:504.6px;top:2.0px;">1</span><span class="t" style="left:569.8px;top:2.0px;">0</span><span class="t" style="left:716.7px;top:2.0px;letter-spacing:0.143px">1500</span><span class="t" style="left:859.7px;top:2.0px;letter-spacing:0.174px">{end cycle=59914.7, start cycle=59891.0, start pc=2147493840, core ID=0, end pc=2147493852, func=0}</span></div>
<div class="row" style="top:877px"><div class="vl" style="left:33px"></div><div class="vl" style="left:183px"></div><div class="vl" style="left:352px"></div><div class="vl" style="left:418px"></div><div class="vl" style="left:498px"></div><div class="vl" style="left:564px"></div><div class="vl" style="left:630px"></div><div class="vl" style="left:711px"></div><div class="vl" style="left:788px"></div><div class="vl" style="left:854px"></div><span class="t" style="left:39.4px;top:2.0px;letter-spacing:0.613px"><span class="u" style="width:7.0px;transform:translateY(1.2px) scaleX(0.786)">_</span>printf<span class="u" style="width:7.0px;transform:translateY(1.2px) scaleX(0.786)">_</span>i</span><span class="t" style="left:188.7px;top:2.0px;letter-spacing:0.039px">11:47:49.432 745 472</span><span class="t" style="left:357.8px;top:2.0px;">X</span><span class="t" style="left:423.8px;top:2.0px;letter-spacing:-0.38px">INFO</span><span class="t" style="left:504.6px;top:2.0px;">1</span><span class="t" style="left:569.8px;top:2.0px;">0</span><span class="t" style="left:716.7px;top:2.0px;letter-spacing:0.143px">14750</span><span class="t" style="left:859.7px;top:2.0px;letter-spacing:0.174px">{end cycle=60162.2, start cycle=59926.1, start pc=2147492100, core ID=0, end pc=2147492462, func=0}</span></div>
<div class="row" style="top:901px"><div class="vl" style="left:33px"></div><div class="vl" style="left:183px"></div><div class="vl" style="left:352px"></div><div class="vl" style="left:418px"></div><div class="vl" style="left:498px"></div><div class="vl" style="left:564px"></div><div class="vl" style="left:630px"></div><div class="vl" style="left:711px"></div><div class="vl" style="left:788px"></div><div class="vl" style="left:854px"></div><span class="t" style="left:39.4px;top:2.0px;letter-spacing:0.708px"><span class="u" style="width:7.0px;transform:translateY(1.2px) scaleX(0.786)">_</span>printf<span class="u" style="width:7.0px;transform:translateY(1.2px) scaleX(0.786)">_</span>common</span><span class="t" style="left:188.7px;top:2.0px;letter-spacing:0.039px">11:47:49.432 749 056</span><span class="t" style="left:357.8px;top:2.0px;">X</span><span class="t" style="left:423.8px;top:2.0px;letter-spacing:-0.38px">INFO</span><span class="t" style="left:504.6px;top:2.0px;">1</span><span class="t" style="left:569.8px;top:2.0px;">0</span><span class="t" style="left:716.7px;top:2.0px;letter-spacing:0.143px">2000</span><span class="t" style="left:859.7px;top:2.0px;letter-spacing:0.174px">{end cycle=60015.7, start cycle=59985.0, start pc=2147491826, core ID=0, end pc=2147492046, func=0}</span></div>
<div class="row" style="top:925px"><div class="vl" style="left:33px"></div><div class="vl" style="left:183px"></div><div class="vl" style="left:352px"></div><div class="vl" style="left:418px"></div><div class="vl" style="left:498px"></div><div class="vl" style="left:564px"></div><div class="vl" style="left:630px"></div><div class="vl" style="left:711px"></div><div class="vl" style="left:788px"></div><div class="vl" style="left:854px"></div><span class="t" style="left:39.4px;top:2.0px;letter-spacing:0.343px"><span class="u" style="width:14.0px;transform:translateY(1.2px) scaleX(0.786)">__</span>sfputs<span class="u" style="width:7.0px;transform:translateY(1.2px) scaleX(0.786)">_</span>r</span><span class="t" style="left:188.7px;top:2.0px;letter-spacing:0.039px">11:47:49.432 749 568</span><span class="t" style="left:357.8px;top:2.0px;">X</span><span class="t" style="left:423.8px;top:2.0px;letter-spacing:-0.38px">INFO</span><span class="t" style="left:504.6px;top:2.0px;">1</span><span class="t" style="left:569.8px;top:2.0px;">0</span><span class="t" style="left:716.7px;top:2.0px;letter-spacing:0.143px">1250</span><span class="t" style="left:859.7px;top:2.0px;letter-spacing:0.174px">{end cycle=60010.4, start cycle=59993.6, start pc=2147491130, core ID=0, end pc=2147491194, func=0}</span></div>
<div class="row" style="top:949px"><div class="vl" style="left:33px"></div><div class="vl" style="left:183px"></div><div class="vl" style="left:352px"></div><div class="vl" style="left:418px"></div><div class="vl" style="left:498px"></div><div class="vl" style="left:564px"></div><div class="vl" style="left:630px"></div><div class="vl" style="left:711px"></div><div class="vl" style="left:788px"></div><div class="vl" style="left:854px"></div><span class="t" style="left:39.4px;top:2.0px;letter-spacing:0.343px"><span class="u" style="width:14.0px;transform:translateY(1.2px) scaleX(0.786)">__</span>sfputs<span class="u" style="width:7.0px;transform:translateY(1.2px) scaleX(0.786)">_</span>r</span><span class="t" style="left:188.7px;top:2.0px;letter-spacing:0.039px">11:47:49.432 751 872</span><span class="t" style="left:357.8px;top:2.0px;">X</span><span class="t" style="left:423.8px;top:2.0px;letter-spacing:-0.38px">INFO</span><span class="t" style="left:504.6px;top:2.0px;">1</span><span class="t" style="left:569.8px;top:2.0px;">0</span><span class="t" style="left:716.7px;top:2.0px;letter-spacing:0.143px">2000</span><span class="t" style="left:859.7px;top:2.0px;letter-spacing:0.174px">{end cycle=60058.9, start cycle=60029.6, start pc=2147491130, core ID=0, end pc=2147491194, func=0}</span></div>
<div class="row" style="top:973px"><div class="vl" style="left:33px"></div><div class="vl" style="left:183px"></div><div class="vl" style="left:352px"></div><div class="vl" style="left:418px"></div><div class="vl" style="left:498px"></div><div class="vl" style="left:564px"></div><div class="vl" style="left:630px"></div><div class="vl" style="left:711px"></div><div class="vl" style="left:788px"></div><div class="vl" style="left:854px"></div><span class="t" style="left:39.4px;top:2.0px;letter-spacing:0.486px"><span class="u" style="width:14.0px;transform:translateY(1.2px) scaleX(0.786)">__</span>sfputc<span class="u" style="width:7.0px;transform:translateY(1.2px) scaleX(0.786)">_</span>r</span><span class="t" style="left:188.7px;top:2.0px;letter-spacing:0.039px">11:47:49.432 752 384</span><span class="t" style="left:357.8px;top:2.0px;">X</span><span class="t" style="left:423.8px;top:2.0px;letter-spacing:-0.38px">INFO</span><span class="t" style="left:504.6px;top:2.0px;">1</span><span class="t" style="left:569.8px;top:2.0px;">0</span><span class="t" style="left:716.7px;top:2.0px;letter-spacing:0.143px">0</span><span class="t" style="left:859.7px;top:2.0px;letter-spacing:0.174px">{end cycle=60041.5, start cycle=60038.4, start pc=2147491090, core ID=0, end pc=2147491128, func=0}</span></div>
<div style="left:1577px;top:155px;width:20px;height:863px;background:#f0f0f0"></div>
<div style="left:25px;top:997px;width:1551px;height:21px;background:#f0f0f0"></div>
<div style="left:1577px;top:176px;width:19px;height:21px;background:#cdcdcd"></div>
<div style="left:46px;top:997px;width:1087px;height:19px;background:#cdcdcd"></div>
<svg style="left:1581px;top:161px" width="12" height="9" viewBox="0 0 12 9" fill="none" stroke="#585858" stroke-width="2.2"><path d="M1.4 7.8L5.6 2.8L9.8 7.8"/></svg>
<svg style="left:1581px;top:1002px" width="12" height="9" viewBox="0 0 12 9" fill="none" stroke="#585858" stroke-width="2.2"><path d="M1.4 1.6L5.6 6.6L9.8 1.6"/></svg>
<svg style="left:30px;top:1001px" width="9" height="12" viewBox="0 0 9 12" fill="none" stroke="#585858" stroke-width="2.2"><path d="M7.4 1.4L2.2 5.8L7.4 10.2"/></svg>
<svg style="left:1561px;top:1001px" width="9" height="12" viewBox="0 0 9 12" fill="none" stroke="#585858" stroke-width="2.2"><path d="M1.6 1.4L6.8 5.8L1.6 10.2"/></svg>
<div style="left:1597px;top:155px;width:1px;height:863px;background:#e4e4e4"></div>
<div style="left:1576px;top:997px;width:1px;height:20px;background:#fff"></div>
<div style="left:1px;top:1018px;width:1620px;height:25px;background:#f7f7f7"></div>
<div style="left:1300px;top:1024px;width:1px;height:15px;background:repeating-linear-gradient(180deg,#bdbdbd 0 1px,transparent 1px 3px)"></div>
<svg style="left:10px;top:9px" width="20" height="20" viewBox="0 0 20 20"><circle cx="10" cy="10" r="9.9" fill="#153c8e"/><g stroke="#f2f4fb" stroke-width="3.6" stroke-linecap="round"><path d="M9.9 10.1L9.9 5.3M9.9 10.1L5.6 12.5M9.9 10.1L14.3 12.5"/></g><g fill="#f2f4fb"><circle cx="9.9" cy="5.3" r="3"/><circle cx="5.6" cy="12.5" r="3"/><circle cx="14.3" cy="12.5" r="3"/><circle cx="9.9" cy="10.1" r="2.8"/></g><g fill="#0b0b6e"><circle cx="9.9" cy="5.3" r="1.25"/><circle cx="5.6" cy="12.5" r="1.25"/><circle cx="14.3" cy="12.5" r="1.25"/><circle cx="9.9" cy="10.1" r="1.35"/></g></svg>
<svg style="left:13px;top:71.5px" width="16" height="16" viewBox="0 0 16 16"><path d="M5.4 6.4L8 4.2L15 12.6L14.4 14.8L11.8 15.4Z" fill="#b9783a" stroke="#8a5524" stroke-width=".7" stroke-linejoin="round"/><path d="M7.4 5L13.6 12.4" stroke="#d9a066" stroke-width=".9"/><path d="M.6 7.2C1 4.2 3.6 1.2 7.4 .5L11.2 .7L10.8 2.3L8.4 3.2L9.4 5L6.2 7.6L4.6 5.6L2.8 6.4L2.2 8.6Z" fill="#8d8d8d" stroke="#5e5e5e" stroke-width=".7" stroke-linejoin="round"/><path d="M2 6C2.8 3.8 4.8 2 7.4 1.5" stroke="#c9c9c9" stroke-width=".9" fill="none"/></svg>
<svg style="left:54px;top:73px" width="16" height="16" viewBox="0 0 16 16"><g stroke="#2a6e55" stroke-width="1.15" fill="none" stroke-linecap="round" stroke-linejoin="round"><path d="M5.5 3.4V.5M8.3 3.7L9.5 1.4M4 4.5H1.2M4.6 7.3L3.8 8.4L2.3 8.5M11 4.6L13 4.5L14.7 5.5M13 8.4H14.6L15.5 9.6M5.6 10L5.4 11.8L6.5 13.5M9.5 12.2V13.4L10.6 14.6"/></g><circle cx="5.6" cy="4.7" r="1.7" fill="#9fcf8a" stroke="#1f7f96" stroke-width="1"/><ellipse cx="9.2" cy="8.1" rx="4.5" ry="3.2" fill="#b9dca4" stroke="#1f7f96" stroke-width="1.1" transform="rotate(42 9.2 8.1)"/><ellipse cx="8.4" cy="7.2" rx="2.4" ry="1.3" fill="#e6f3dc" transform="rotate(42 8.4 7.2)"/></svg>
<svg style="left:98px;top:75px" width="11" height="11" viewBox="0 0 11 11"><rect x=".5" y=".5" width="10" height="10" rx="1.4" fill="#e8212d" stroke="#dd4650" stroke-width="1"/><rect x="1.6" y="1.6" width="7.8" height="7.8" rx=".5" fill="none" stroke="#f07d84" stroke-width=".7"/></svg>
<svg style="left:131px;top:73px" width="16" height="16" viewBox="0 0 16 16"><g stroke="#2a6e55" stroke-width="1.15" fill="none" stroke-linecap="round" stroke-linejoin="round"><path d="M5.5 3.4V.5M8.3 3.7L9.5 1.4M4 4.5H1.2M4.6 7.3L3.8 8.4L2.3 8.5M11 4.6L13 4.5L14.7 5.5M13 8.4H14.6L15.5 9.6M5.6 10L5.4 11.8L6.5 13.5M9.5 12.2V13.4L10.6 14.6"/></g><circle cx="5.6" cy="4.7" r="1.7" fill="#9fcf8a" stroke="#1f7f96" stroke-width="1"/><ellipse cx="9.2" cy="8.1" rx="4.5" ry="3.2" fill="#b9dca4" stroke="#1f7f96" stroke-width="1.1" transform="rotate(42 9.2 8.1)"/><ellipse cx="8.4" cy="7.2" rx="2.4" ry="1.3" fill="#e6f3dc" transform="rotate(42 8.4 7.2)"/></svg>
<svg style="left:287px;top:73px" width="15" height="14" viewBox="0 0 15 14"><rect x=".5" y="1" width="14" height="12.5" fill="#e4f1fb" stroke="#a5832e" stroke-width="1"/><rect x="0" y="0" width="15" height="2.8" fill="#4a7fc0"/><path d="M.6 1.5H13.8" stroke="#9bcbee" stroke-width=".8"/><text x="6.7" y="11.4" font-family="Liberation Sans,sans-serif" font-weight="bold" font-size="11" text-anchor="middle" fill="#1f5f9f">c</text></svg>
<svg style="left:510px;top:72px" width="16" height="16" viewBox="0 0 16 16"><g fill="#d9d4bf"><circle cx="8" cy="8" r="5.4"/><g id="gt"><rect x="6.6" y="0" width="2.8" height="16" rx=".6"/></g><rect x="6.6" y="0" width="2.8" height="16" rx=".6" transform="rotate(45 8 8)"/><rect x="6.6" y="0" width="2.8" height="16" rx=".6" transform="rotate(90 8 8)"/><rect x="6.6" y="0" width="2.8" height="16" rx=".6" transform="rotate(135 8 8)"/></g><circle cx="8" cy="8" r="2.4" fill="#fff"/></svg>
<svg style="left:553px;top:72.6px" width="16" height="16" viewBox="0 0 16 16"><rect x=".6" y="2.6" width="13" height="11.8" fill="#eaf2fb" stroke="#a58f55" stroke-width="1.1"/><rect x="1.2" y="3.2" width="11.8" height="2.2" fill="#4a8bd6"/><path d="M12.4 0L13.5 2.6L16 3.6L13.5 4.7L12.4 7.4L11.3 4.7L8.8 3.6L11.3 2.6Z" fill="#fff3b0" stroke="#c99a2a" stroke-width=".8"/><path d="M13 7.5C12.6 10.6 10.5 13 6 13.6" stroke="#ecd9a0" stroke-width="1.2" fill="none"/></svg>
<svg style="left:594px;top:72.3px" width="16" height="16" viewBox="0 0 16 16"><path d="M1 1.6H13.4L15 3.2V15H1Z" fill="#e9e9e9" stroke="#b8b8b8" stroke-width="1"/><rect x="3.6" y="2" width="8.6" height="5" fill="#f6f6f6" stroke="#c4c4c4" stroke-width=".8"/><rect x="4.6" y="9.8" width="6.8" height="5" fill="#d0d0d0" stroke="#b8b8b8" stroke-width=".8"/><rect x="8.6" y="10.8" width="1.6" height="3" fill="#f4f4f4"/></svg>
<svg style="left:617px;top:72.3px" width="16" height="16" viewBox="0 0 16 16"><path d="M.6 1H9L10.4 2.4V10H.6Z" fill="#ededed" stroke="#c0c0c0" stroke-width="1"/><path d="M3 3.2H11.4L12.8 4.6V12.4H3Z" fill="#ededed" stroke="#c0c0c0" stroke-width="1"/><path d="M5.6 5.6H14L15.4 7V15.4H5.6Z" fill="#e9e9e9" stroke="#b8b8b8" stroke-width="1"/><rect x="7.6" y="6" width="5.4" height="3.4" fill="#f6f6f6" stroke="#c4c4c4" stroke-width=".7"/><rect x="8.2" y="11.4" width="4.6" height="3.8" fill="#d0d0d0" stroke="#b8b8b8" stroke-width=".7"/></svg>
<svg style="left:648.5px;top:73px" width="14" height="16" viewBox="0 0 14 16"><path d="M.6 .6H8.4L12.2 4.4V15.4H.6Z" fill="#f4f7fb" stroke="#8c9cb8" stroke-width="1"/><path d="M8.4 .6V4.4H12.2Z" fill="#f2e3b0" stroke="#c9b27a" stroke-width=".8"/><path d="M2.6 4.2H7M2.6 6.4H9.6" stroke="#6f8fd0" stroke-width="1.1"/><text x="7.2" y="14.4" font-family="Liberation Sans,sans-serif" font-weight="bold" font-size="7.4" text-anchor="middle" fill="#1e3f86" textLength="11.5" lengthAdjust="spacingAndGlyphs">010</text></svg>
<svg style="left:676px;top:73px" width="16" height="16" viewBox="0 0 16 16"><path d="M.8 9.4L6.6 4.2V7.4C10.4 7.2 12.8 4.6 13.8 .8C15.6 6.6 12.6 11.6 6.6 11.8V14.8Z" fill="#eeeeee" stroke="#bdbdbd" stroke-width="1" stroke-linejoin="round"/></svg>
<svg style="left:699px;top:73px" width="16" height="16" viewBox="0 0 16 16"><path d="M15.2 9.4L9.4 4.2V7.4C5.6 7.2 3.2 4.6 2.2 .8C.4 6.6 3.4 11.6 9.4 11.8V14.8Z" fill="#eeeeee" stroke="#bdbdbd" stroke-width="1" stroke-linejoin="round"/></svg>
<svg style="left:726px;top:71.7px" width="17" height="16" viewBox="0 0 17 16"><text x="8.5" y="4.6" font-family="Liberation Sans,sans-serif" font-weight="bold" font-size="5.4" text-anchor="middle" fill="#333" textLength="13" lengthAdjust="spacingAndGlyphs">LOAD</text><path d="M6.4 5.6H10.6V8.4H13L8.5 12.6L4 8.4H6.4Z" fill="#1a2fa8"/><rect x=".6" y="13" width="15.8" height="2.6" fill="#6e6e6e"/><rect x="2" y="13.8" width="1.4" height="1" fill="#ddd"/></svg>
<svg style="left:748.5px;top:73px" width="17" height="16" viewBox="0 0 17 16"><path d="M2.2 1.6H5.6L7.2 3.6V11L5.6 13H2.2L.6 11V3.6Z" fill="#767676"/><circle cx="4.1" cy="7.3" r="1.8" fill="#1b2fa6"/><g stroke="#2438a8" stroke-width="1.1" fill="none"><path d="M7.4 7.3H14M8.4 7.3L12.4 3.4H14.6M8.4 7.3L12.4 11.4H14.6"/></g><g fill="#2438a8"><rect x="14" y="2.2" width="2.4" height="2.4"/><rect x="13.4" y="6.1" width="2.4" height="2.4"/><rect x="14" y="10.2" width="2.4" height="2.4"/></g></svg>
<svg style="left:772px;top:72px" width="16" height="16" viewBox="0 0 16 16"><circle cx="8" cy="8" r="8" fill="#153c8e"/><g stroke="#f2f4fb" stroke-width="2.9" stroke-linecap="round"><path d="M8 8.1L8 4.2M8 8.1L4.5 10.1M8 8.1L11.5 10.1"/></g><g fill="#f2f4fb"><circle cx="8" cy="4.1" r="2.6"/><circle cx="4.4" cy="10.1" r="2.6"/><circle cx="11.6" cy="10.1" r="2.6"/><circle cx="8" cy="8.1" r="2.2"/></g><g fill="#173a8c"><circle cx="8" cy="4.1" r="1.45"/><circle cx="4.4" cy="10.1" r="1.45"/><circle cx="11.6" cy="10.1" r="1.45"/></g><g fill="#0b0b6e"><circle cx="8" cy="4.1" r=".8"/><circle cx="4.4" cy="10.1" r=".8"/><circle cx="11.6" cy="10.1" r=".8"/><circle cx="8" cy="8.1" r="1.05"/></g></svg>
<svg style="left:794.4px;top:71.5px" width="17" height="17" viewBox="0 0 17 17"><path d="M1 3.6V12.6C1 14.6 4.2 16 7.6 16C11 16 14.2 14.6 14.2 12.6V3.6Z" fill="#2f9440" stroke="#123d16" stroke-width="1.1"/><ellipse cx="7.6" cy="3.6" rx="6.6" ry="2.8" fill="#4fb452" stroke="#123d16" stroke-width="1.1"/><path d="M1 6.8C1 8.6 4.2 9.8 7.6 9.8C11 9.8 14.2 8.6 14.2 6.8M1 9.8C1 11.6 4.2 12.8 7.6 12.8C11 12.8 14.2 11.6 14.2 9.8" fill="none" stroke="#123d16" stroke-width="1.2"/><path d="M9.6 9.8C9.6 7.2 13.8 7.2 13.8 9.8" fill="none" stroke="#4aa3e0" stroke-width="1.1"/><rect x="7.4" y="9.8" width="8.6" height="6.6" fill="#30b6ec"/><path d="M9.6 11.4H14" stroke="#8fd6f6" stroke-width="1"/></svg>
<svg style="left:825px;top:73px" width="14" height="14" viewBox="0 0 14 14"><rect x=".9" y=".9" width="11.8" height="9.4" rx="1.4" fill="#eaf1fb" stroke="#2f5fb3" stroke-width="1.8"/><path d="M3.2 4H8.4M3.2 6.4H10" stroke="#34479a" stroke-width="1.1"/><path d="M4.6 11.2H9L9.8 12.4H3.8Z" fill="#2f5fb3"/><rect x="1.6" y="12.4" width="10.4" height="1.4" fill="#3f74c6"/></svg>
<svg style="left:852.8px;top:73.4px" width="13" height="13" viewBox="0 0 13 13"><circle cx="6.2" cy="6.8" r="3.3" fill="#b4d2ea" stroke="#2273b4" stroke-width="1.5"/><path d="M.8 1.4L11.8 11.8" stroke="#878c94" stroke-width="1.6"/></svg>
<svg style="left:882.5px;top:75px" width="16" height="11" viewBox="0 0 16 11"><rect x=".6" y=".8" width="3.8" height="9.4" fill="#fbe794" stroke="#b48818" stroke-width="1.1"/><path d="M6.8 .5L14.4 5.5L6.8 10.5Z" fill="#4fb060" stroke="#2e8a46" stroke-width=".8"/></svg>
<svg style="left:907.5px;top:75px" width="12" height="11" viewBox="0 0 12 11"><rect x=".6" y=".6" width="3.8" height="9.8" fill="#ececec" stroke="#c3c3c3" stroke-width="1"/><rect x="7" y=".6" width="3.8" height="9.8" fill="#ececec" stroke="#c3c3c3" stroke-width="1"/></svg>
<svg style="left:931px;top:75px" width="11" height="11" viewBox="0 0 11 11"><rect x=".5" y=".5" width="10" height="10" rx="1.4" fill="#e8212d" stroke="#dd4650" stroke-width="1"/><rect x="1.6" y="1.6" width="7.8" height="7.8" rx=".5" fill="none" stroke="#f07d84" stroke-width=".7"/></svg>
<svg style="left:951.5px;top:74px" width="15" height="13" viewBox="0 0 15 13"><path d="M2.4 10.6V2.6L8.6 8.4L11.6 9.2V11.6" fill="none" stroke="#909090" stroke-width="1"/><path d="M10 9.8L11.6 12.6L12.6 9.6Z" fill="#909090"/><path d="M11.8 8.6L12.2 4.6" stroke="#909090" stroke-width="1"/><circle cx="2.4" cy="10.4" r="1.9" fill="#d9d9d9" stroke="#8a8a8a" stroke-width=".9"/><circle cx="12.4" cy="2.7" r="1.9" fill="#d9d9d9" stroke="#8a8a8a" stroke-width=".9"/></svg>
<svg style="left:975px;top:74.5px" width="16" height="13" viewBox="0 0 16 13"><path d="M.6 .9H7.9C9 .9 9.6 1.5 9.6 2.6V6H11.1L7.4 10.2L3.6 6H6.3V3.6H.6C.2 2.8 .2 1.7 .6 .9Z" fill="#fdf1c0" stroke="#bf891b" stroke-width=".9" stroke-linejoin="round"/><path d="M0.0 10.9C0.5 8.6 3.7 8.6 4.2 10.9Z" fill="#2b5288"/><path d="M11.0 10.9C11.5 8.6 14.7 8.6 15.2 10.9Z" fill="#2b5288"/></svg>
<svg style="left:998px;top:74.5px" width="16" height="13" viewBox="0 0 16 13"><path d="M.5 6.4V4C.5 1.6 2.4 .5 4.5 .5H8.6C11.5 .5 13 2.4 13 5V5.8H15L11.5 10L7.8 5.8H10V5C10 3.9 9.4 3.4 8.5 3.4H4.6C3.7 3.4 3.2 3.9 3.2 4.8V6.4C3.2 7.5 .5 7.5 .5 6.4Z" fill="#fdf1c0" stroke="#bf891b" stroke-width=".9" stroke-linejoin="round"/><path d="M3.9 10.9C4.4 8.6 7.6 8.6 8.1 10.9Z" fill="#2b5288"/></svg>
<svg style="left:1021px;top:74.5px" width="16" height="13" viewBox="0 0 16 13"><path d="M6.2 11V4.6C6.2 3.4 7 2.6 8.2 2.6H10.2V.4L15 4L10.2 7.5V5.4H9.7C9.3 5.4 9.2 5.6 9.2 5.9V11C9.2 11.8 6.2 11.8 6.2 11Z" fill="#fdf1c0" stroke="#bf891b" stroke-width=".9" stroke-linejoin="round"/><path d="M0.0 10.9C0.5 8.6 3.7 8.6 4.2 10.9Z" fill="#2b5288"/><path d="M11.0 10.9C11.5 8.6 14.7 8.6 15.2 10.9Z" fill="#2b5288"/></svg>
<svg style="left:1052px;top:73px" width="16" height="15" viewBox="0 0 16 15"><path d="M.4 1.6H12.4M.4 5.3H12.4M.4 9.3H7" stroke="#a2a2a2" stroke-width="2"/><path d="M7 9.2H10.6V7.2L15 11L10.6 14.6V12.6H7Z" fill="#f6f6f6" stroke="#adadad" stroke-width="1"/></svg>
<svg style="left:1074px;top:73.5px" width="17" height="14" viewBox="0 0 17 14"><path d="M.8 3H9.6V.8L15.8 4.2L9.6 7.6V5.4H8.4V8.6H10.4L7.2 12L4 8.6H6V5.4H.8Z" fill="#f4f4f4" stroke="#bcbcbc" stroke-width="1" stroke-linejoin="round"/><path d="M0 13.8C.4 11.8 3.4 11.8 3.8 13.8ZM12.2 13.8C12.6 11.8 15.6 11.8 16 13.8Z" fill="#b4b4b4"/></svg>
<svg style="left:1097px;top:74px" width="16" height="12" viewBox="0 0 16 12"><text x="3.4" y="11.7" font-family="Liberation Serif,serif" font-weight="bold" font-size="17.5" text-anchor="middle" fill="#10108c" textLength="6.2" lengthAdjust="spacingAndGlyphs">i</text><path d="M6.4 4.6H10.6V1.8L15.4 6L10.6 10.2V7.4H6.4Z" fill="#cfc62a" stroke="#7e5c12" stroke-width=".9" stroke-linejoin="round"/></svg>
<svg style="left:1129px;top:72.5px" width="16" height="16" viewBox="0 0 16 16"><path d="M7.2 .6L14 4L7.2 7.4Z" fill="#43a95c" stroke="#2f8a48" stroke-width=".6"/><path d="M.4 10.2L3.9 6L7.4 10.2H5.2C5.2 11.8 6.6 12.5 8.6 12.5C10.6 12.5 12.2 11.6 12.2 8.8H14.8C14.8 12.8 12.2 14.8 8.6 14.8C5 14.8 2.6 13 2.6 10.2Z" fill="#fdf0c0" stroke="#d9961c" stroke-width="1" stroke-linejoin="round"/></svg>
<svg style="left:1156.9px;top:73px" width="16" height="16" viewBox="0 0 16 16"><g stroke="#2a6e55" stroke-width="1.15" fill="none" stroke-linecap="round" stroke-linejoin="round"><path d="M5.5 3.4V.5M8.3 3.7L9.5 1.4M4 4.5H1.2M4.6 7.3L3.8 8.4L2.3 8.5M11 4.6L13 4.5L14.7 5.5M13 8.4H14.6L15.5 9.6M5.6 10L5.4 11.8L6.5 13.5M9.5 12.2V13.4L10.6 14.6"/></g><circle cx="5.6" cy="4.7" r="1.7" fill="#9fcf8a" stroke="#1f7f96" stroke-width="1"/><ellipse cx="9.2" cy="8.1" rx="4.5" ry="3.2" fill="#b9dca4" stroke="#1f7f96" stroke-width="1.1" transform="rotate(42 9.2 8.1)"/><ellipse cx="8.4" cy="7.2" rx="2.4" ry="1.3" fill="#e6f3dc" transform="rotate(42 8.4 7.2)"/></svg>
<svg style="left:1199.5px;top:72.5px" width="16" height="16" viewBox="0 0 16 16"><circle cx="8" cy="8" r="7.4" fill="#3c9f46" stroke="#2a7c34" stroke-width="1"/><circle cx="8" cy="6.6" r="5.6" fill="#57b45c" opacity=".7"/><path d="M5.8 3.8L12.2 8L5.8 12.2Z" fill="#fff"/></svg>
<svg style="left:1241.5px;top:72.5px" width="17" height="16" viewBox="0 0 17 16"><g transform="scale(.72)"><circle cx="8" cy="8" r="7.4" fill="#3c9f46" stroke="#2a7c34" stroke-width="1"/><circle cx="8" cy="6.6" r="5.6" fill="#57b45c" opacity=".7"/><path d="M5.8 3.8L12.2 8L5.8 12.2Z" fill="#fff"/></g><rect x="6.8" y="9.6" width="9" height="5.2" rx=".8" fill="#e5222b"/><path d="M9.6 9.6V8.2H13V9.6" fill="none" stroke="#e5222b" stroke-width="1.2"/><path d="M6.8 12H15.8" stroke="#fff" stroke-width=".9"/><rect x="10.4" y="11.2" width="1.8" height="1.8" fill="#fff"/></svg>
<svg style="left:1287px;top:73px" width="16" height="15" viewBox="0 0 16 15"><rect x="6.4" y="1.4" width="7.6" height="6.6" fill="#e8eef8" stroke="#7f93b8" stroke-width="1"/><path d="M8.6 1.4C8.6 -.2 11.8 -.2 11.8 1.4" fill="none" stroke="#7f93b8" stroke-width="1"/><path d="M.8 13.8V4.4H5L6.2 5.8H11.6V8" fill="#f6dc9c" stroke="#b8801c" stroke-width="1" stroke-linejoin="round"/><path d="M.8 13.8L3.6 7.8H15.4L12.4 13.8Z" fill="#f9e3a6" stroke="#b8801c" stroke-width="1" stroke-linejoin="round"/></svg>
<svg style="left:1310.5px;top:72.5px" width="17" height="16" viewBox="0 0 17 16"><path d="M4.2 7L.6 11.2V15.2L5.6 15.4L10.4 10.6Z" fill="#ffee8a"/><path d="M4 9.4L1 14.9L5.6 14.6L8.8 11Z" fill="#fffdf0"/><path d="M4.4 6.8L.7 11.1M10.2 11L5.8 15.2" stroke="#f0a52a" stroke-width="1.1" fill="none"/><path d="M7 5.4L11.8 .8L16.1 .6L16.4 4.9L12 9.5Z" fill="#fbe79a" stroke="#e39b25" stroke-width="1" stroke-linejoin="round"/><circle cx="12.1" cy="3.9" r=".85" fill="#2c4f9e"/><ellipse cx="8" cy="9.1" rx="4.2" ry="2.1" transform="rotate(45 8 9.1)" fill="#c9c5cf" stroke="#9c7426" stroke-width=".9"/></svg>
<svg style="left:1358.5px;top:72.5px" width="16" height="16" viewBox="0 0 16 16"><path d="M5.6 4.6H14.6V15.2H3.4V11.4" fill="#f1f1f1" stroke="#b8b8b8" stroke-width="1"/><path d="M9.4 7H12.8M9.4 9.2H12.8M9.4 11.4H12.8M5 13.4H12.8" stroke="#b4b4b4" stroke-width="1"/><path d="M3.2 .8H6.6V6H9L4.9 10.6L.8 6H3.2Z" fill="#e8e8e8" stroke="#adadad" stroke-width="1" stroke-linejoin="round"/><rect x="1.6" y="12.2" width="5" height="3" fill="#d2d2d2"/></svg>
<svg style="left:1400.5px;top:72.5px" width="16" height="16" viewBox="0 0 16 16"><path d="M3.4 5V.8H14.6V11.4H8" fill="#f1f1f1" stroke="#b8b8b8" stroke-width="1"/><path d="M8.4 3H12.8M9.4 5.2H12.8M9.4 7.4H12.8M9.4 9.4H12.8" stroke="#b4b4b4" stroke-width="1"/><rect x="3.8" y="1.4" width="3" height="2" fill="#d2d2d2"/><path d="M3.2 15.2H6.6V9.6H9L4.9 5L.8 9.6H3.2Z" fill="#e8e8e8" stroke="#adadad" stroke-width="1" stroke-linejoin="round"/></svg>
<svg style="left:1440.5px;top:73.5px" width="17" height="14" viewBox="0 0 17 14"><path d="M1.4 1.6L5 6M5 1.6L1.4 6M.6 3.8H5.8M3.2 1V6.6" stroke="#a4a4a4" stroke-width=".9"/><path d="M3.4 7.4L8.4 2.8V5.4H15.8V9.4H8.4V12Z" fill="#f4f4f4" stroke="#adadad" stroke-width="1" stroke-linejoin="round"/></svg>
<svg style="left:1463.5px;top:73.5px" width="17" height="14" viewBox="0 0 17 14"><path d="M12 1.6L15.6 6M15.6 1.6L12 6M11.2 3.8H16.4M13.8 1V6.6" stroke="#a4a4a4" stroke-width=".9"/><path d="M13.6 7.4L8.6 2.8V5.4H1.2V9.4H8.6V12Z" fill="#f4f4f4" stroke="#adadad" stroke-width="1" stroke-linejoin="round"/></svg>
<svg style="left:1488.5px;top:74px" width="15" height="13" viewBox="0 0 15 13"><path d="M.8 6.5L6.8 .8V4H14.2V9H6.8V12.2Z" fill="#fef4cf" stroke="#d9961c" stroke-width="1.2" stroke-linejoin="round"/></svg>
<svg style="left:1530.5px;top:74px" width="15" height="13" viewBox="0 0 15 13"><path d="M14.2 6.5L8.2 .8V4H.8V9H8.2V12.2Z" fill="#f6f6f6" stroke="#c1c1c1" stroke-width="1.1" stroke-linejoin="round"/></svg>
<svg style="left:1580px;top:72.5px" width="16" height="16" viewBox="0 0 16 16"><rect x=".6" y="3" width="14" height="12.2" fill="#eef5fc" stroke="#a58f55" stroke-width="1.1"/><rect x="1.2" y="3.6" width="12.8" height="2.4" fill="#3f7fd0"/><path d="M8.2 9.6L10.4 6.6" stroke="#555" stroke-width="1"/><path d="M9.6 4.6L12.4 .8C13.8 .2 15.6 1.8 15.2 3.4L12 6.6C10.8 7 9.4 5.8 9.6 4.6Z" fill="#3fae4e" stroke="#23803a" stroke-width=".8"/><path d="M7.6 8.6C8.4 10.6 8.6 12 7.8 13.4" stroke="#cfe1f2" stroke-width="1.2" fill="none"/></svg>
<svg style="left:1504.3px;top:103.3px" width="16" height="16" viewBox="0 0 16 16"><circle cx="6.2" cy="6.2" r="4.4" fill="none" stroke="#707070" stroke-width="1.9"/><path d="M9.6 9.6L14.8 14.8" stroke="#707070" stroke-width="2.3" stroke-linecap="round"/></svg>
<svg style="left:1544.1px;top:102.2px" width="16" height="16" viewBox="0 0 16 16"><rect x=".8" y="3.8" width="11.8" height="11" fill="#e4f2fc" stroke="#9a7e42" stroke-width="1.1"/><rect x="1.4" y="4.4" width="10.6" height="2" fill="#4a83cf"/><path d="M5 6.4V14.8M.8 10.4H12.6" stroke="#9a7e42" stroke-width="1"/><path transform="translate(-.5 1.4)" d="M12.2 .2L13.3 2.8L15.8 3.8L13.3 4.9L12.2 7.6L11.1 4.9L8.6 3.8L11.1 2.8Z" fill="#fff3b0" stroke="#c99a2a" stroke-width=".8"/></svg>
<svg style="left:1575px;top:103px" width="16" height="16" viewBox="0 0 16 16"><rect x=".8" y=".8" width="10.6" height="11" fill="#e9f4fc" stroke="#8f7a4e" stroke-width="1.1"/><rect x="1.4" y="1.4" width="9.4" height="2" fill="#3e78c8"/><path d="M4.6 3.4V11.8M.8 7.6H11.4" stroke="#8f7a4e" stroke-width="1"/><rect x="6.3" y="5.4" width="8.4" height="9.2" fill="#eaf3fc" stroke="#8f7a4e" stroke-width="1"/><text x="10.5" y="13.2" font-family="Liberation Sans,sans-serif" font-weight="bold" font-size="8.8" text-anchor="middle" fill="#1f4fa0">C</text></svg>
<svg style="left:1597.9px;top:103.4px" width="16" height="16" viewBox="0 0 16 16"><g stroke="#2a6e55" stroke-width="1.15" fill="none" stroke-linecap="round" stroke-linejoin="round"><path d="M5.5 3.4V.5M8.3 3.7L9.5 1.4M4 4.5H1.2M4.6 7.3L3.8 8.4L2.3 8.5M11 4.6L13 4.5L14.7 5.5M13 8.4H14.6L15.5 9.6M5.6 10L5.4 11.8L6.5 13.5M9.5 12.2V13.4L10.6 14.6"/></g><circle cx="5.6" cy="4.7" r="1.7" fill="#9fcf8a" stroke="#1f7f96" stroke-width="1"/><ellipse cx="9.2" cy="8.1" rx="4.5" ry="3.2" fill="#b9dca4" stroke="#1f7f96" stroke-width="1.1" transform="rotate(42 9.2 8.1)"/><ellipse cx="8.4" cy="7.2" rx="2.4" ry="1.3" fill="#e6f3dc" transform="rotate(42 8.4 7.2)"/></svg>
<svg style="left:5px;top:127px" width="16" height="3" viewBox="0 0 16 3"><g fill="#9c9386"><rect x="0" y="0" width="2" height="2"/><rect x="4" y="0" width="2" height="2"/><rect x="8" y="0" width="2" height="2"/><rect x="12" y="0" width="2" height="2"/></g></svg>
<svg style="left:7.7px;top:136.8px" width="9" height="8" viewBox="0 0 9 8"><g fill="none" stroke="#8d8378" stroke-width="1.1"><rect x="3.2" y=".6" width="4.8" height="3.6"/><rect x=".6" y="2.9" width="5.2" height="4.3" fill="#f0f0f0"/></g></svg>
<svg style="left:3.9px;top:156.2px" width="16" height="16" viewBox="0 0 16 16"><g stroke="#2a6e55" stroke-width="1.15" fill="none" stroke-linecap="round" stroke-linejoin="round"><path d="M5.5 3.4V.5M8.3 3.7L9.5 1.4M4 4.5H1.2M4.6 7.3L3.8 8.4L2.3 8.5M11 4.6L13 4.5L14.7 5.5M13 8.4H14.6L15.5 9.6M5.6 10L5.4 11.8L6.5 13.5M9.5 12.2V13.4L10.6 14.6"/></g><circle cx="5.6" cy="4.7" r="1.7" fill="#9fcf8a" stroke="#1f7f96" stroke-width="1"/><ellipse cx="9.2" cy="8.1" rx="4.5" ry="3.2" fill="#b9dca4" stroke="#1f7f96" stroke-width="1.1" transform="rotate(42 9.2 8.1)"/><ellipse cx="8.4" cy="7.2" rx="2.4" ry="1.3" fill="#e6f3dc" transform="rotate(42 8.4 7.2)"/></svg>
<svg style="left:3.5px;top:176.5px" width="16" height="16" viewBox="0 0 16 16"><path d="M.8 .8H7L9.8 3.6V11.6H.8Z" fill="#f6f4ea" stroke="#a9a08a" stroke-width="1"/><path d="M7 .8V3.6H9.8Z" fill="#e4d7a6"/><path d="M2.4 3.6H5.6M2.4 5.6H6.4M2.4 7.6H4.6M2.4 9.6H4.2" stroke="#7f9fd6" stroke-width="1"/><path d="M4.8 14.6V6.2H9.4L10.4 8H14.8V14.6Z" fill="#fbd779" stroke="#b9761c" stroke-width="1" stroke-linejoin="round"/><path d="M5.6 9.2H14" stroke="#fdeeb8" stroke-width="1"/></svg>
<svg style="left:29.1px;top:132.9px" width="16" height="16" viewBox="0 0 16 16"><circle cx="8" cy="8" r="8" fill="#153c8e"/><g stroke="#f2f4fb" stroke-width="2.9" stroke-linecap="round"><path d="M8 8.1L8 4.2M8 8.1L4.5 10.1M8 8.1L11.5 10.1"/></g><g fill="#f2f4fb"><circle cx="8" cy="4.1" r="2.6"/><circle cx="4.4" cy="10.1" r="2.6"/><circle cx="11.6" cy="10.1" r="2.6"/><circle cx="8" cy="8.1" r="2.2"/></g><g fill="#173a8c"><circle cx="8" cy="4.1" r="1.45"/><circle cx="4.4" cy="10.1" r="1.45"/><circle cx="11.6" cy="10.1" r="1.45"/></g><g fill="#0b0b6e"><circle cx="8" cy="4.1" r=".8"/><circle cx="4.4" cy="10.1" r=".8"/><circle cx="11.6" cy="10.1" r=".8"/><circle cx="8" cy="8.1" r="1.05"/></g></svg>
<svg style="left:277.8px;top:136.2px" width="12" height="11" viewBox="0 0 12 11"><g fill="#f4f6fb" stroke="#5b78b0" stroke-width=".8"><rect x=".5" y=".5" width="2.4" height="2.4"/><rect x=".5" y="4.2" width="2.4" height="2.4"/><rect x=".5" y="7.9" width="2.4" height="2.4"/></g><path d="M4.6 1.7H11.6M4.6 5.4H11.6M4.6 9.1H11.6" stroke="#5b78b0" stroke-width="1"/></svg>
<svg style="left:458.5px;top:134px" width="12" height="15" viewBox="0 0 12 15"><path d="M.6 .8H7.6L11 4.2V14.2H.6Z" fill="#fbf6e6" stroke="#a88d4a" stroke-width="1"/><path d="M7.6 .8V4.2H11" fill="#efe0a8" stroke="#a88d4a" stroke-width=".8"/><text x="7" y="12.6" font-family="Liberation Sans,sans-serif" font-weight="bold" font-size="11.5" text-anchor="middle" fill="#1f3f80">S</text><rect x="1.6" y="11" width="1.4" height="1.4" fill="#1f3f80"/></svg>
<svg style="left:28.5px;top:182.3px" width="17" height="16" viewBox="0 0 17 16"><path d="M4.2 7L.6 11.2V15.2L5.6 15.4L10.4 10.6Z" fill="#ffee8a"/><path d="M4 9.4L1 14.9L5.6 14.6L8.8 11Z" fill="#fffdf0"/><path d="M4.4 6.8L.7 11.1M10.2 11L5.8 15.2" stroke="#f0a52a" stroke-width="1.1" fill="none"/><path d="M7 5.4L11.8 .8L16.1 .6L16.4 4.9L12 9.5Z" fill="#fbe79a" stroke="#e39b25" stroke-width="1" stroke-linejoin="round"/><circle cx="12.1" cy="3.9" r=".85" fill="#2c4f9e"/><ellipse cx="8" cy="9.1" rx="4.2" ry="2.1" transform="rotate(45 8 9.1)" fill="#c9c5cf" stroke="#9c7426" stroke-width=".9"/></svg>
<svg style="left:1602.5px;top:127px" width="16" height="3" viewBox="0 0 16 3"><g fill="#9c9386"><rect x="0" y="0" width="2" height="2"/><rect x="4" y="0" width="2" height="2"/><rect x="8" y="0" width="2" height="2"/><rect x="12" y="0" width="2" height="2"/></g></svg>
<svg style="left:1604.7px;top:136.8px" width="9" height="8" viewBox="0 0 9 8"><g fill="none" stroke="#8d8378" stroke-width="1.1"><rect x="3.2" y=".6" width="4.8" height="3.6"/><rect x=".6" y="2.9" width="5.2" height="4.3" fill="#f0f0f0"/></g></svg>
<svg style="left:1600.5px;top:155px" width="17" height="12" viewBox="0 0 17 12"><text x="8.5" y="9.9" font-family="Liberation Sans,sans-serif" font-size="9.4" text-anchor="middle" fill="#2a7cc6" stroke="#2a7cc6" stroke-width=".3" textLength="16.2" lengthAdjust="spacingAndGlyphs">(x)=</text></svg>
<svg style="left:1601.1px;top:178.5px" width="16" height="13" viewBox="0 0 16 13"><circle cx="4.4" cy="3.8" r="3.3" fill="#3f8bc8" stroke="#1f6cae" stroke-width=".9"/><ellipse cx="4.2" cy="2.8" rx="2" ry="1.3" fill="#7fb5e0"/><circle cx="11.4" cy="8.9" r="3.3" fill="#3f8bc8" stroke="#1f6cae" stroke-width=".9"/><ellipse cx="11.2" cy="7.9" rx="2" ry="1.3" fill="#7fb5e0"/></svg>
<svg style="left:1600.5px;top:200px" width="17" height="14" viewBox="0 0 17 14"><g fill="none" stroke="#1f72b8" stroke-width="1.25" stroke-linecap="round"><rect x="1.1" y="4.6" width="3.8" height="3.8" rx="1.3" fill="#eaf5fc"/><rect x="8.1" y="4.6" width="3.8" height="3.8" rx="1.3" fill="#eaf5fc"/><path d="M4.9 5.2H8.1M1 4.5L5.6 .9C6.6 .3 7.2 1 7 2.4M11.8 4.5L14.8 1.5C15.8 .9 16.6 1.8 16.3 3.6"/></g><path d="M5.8 10.2L8.8 12.8M8.8 10.2L5.8 12.8M10.4 10.7H13.6M10.4 12.5H13.6" stroke="#1f72b8" stroke-width="1.15"/></svg>
<svg style="left:1600.6px;top:220.2px" width="17" height="17" viewBox="0 0 17 17"><path d="M.6 4.6C4.4 .2 12.6 .2 16.4 4.6C12.6 7.8 4.4 7.8 .6 4.6Z" fill="#fff" stroke="#000" stroke-width="1"/><path d="M.4 3.4C4.4 -.8 12.6 -.8 16.6 3.4" fill="none" stroke="#000" stroke-width="1.3"/><circle cx="8.5" cy="4.4" r="2.4" fill="#19c2dc" stroke="#063" stroke-width=".5"/><circle cx="8.5" cy="4.4" r="1.1" fill="#000"/><rect x=".4" y="7.6" width="16.2" height="9.2" fill="#33aa33"/><path d="M8.5 7.8L11.8 16.8H5.2Z" fill="#f6f01c"/><path d="M8.5 7.8L5.2 16.8H3L7.6 7.8ZM8.5 7.8L11.8 16.8H14L9.4 7.8Z" fill="#9fe02a"/></svg>
<svg style="left:1599.7px;top:243px" width="17" height="17" viewBox="0 0 17 17"><path d="M2 .8H10L13.4 4.2V16H2Z" fill="#efefef" stroke="#7e7e7e" stroke-width="1.2" stroke-linejoin="round"/><path d="M10 .8V4.2H13.4" fill="none" stroke="#7e7e7e" stroke-width="1"/><rect x="3.6" y="7.2" width="12.6" height="6.2" rx="1.6" fill="#e4e4e4" stroke="#7e7e7e" stroke-width="1.1"/><text x="10" y="12.2" font-family="Liberation Sans,sans-serif" font-weight="bold" font-size="4.6" text-anchor="middle" fill="#777">TXT</text></svg>
<svg style="left:1601.5px;top:266px" width="15" height="16" viewBox="0 0 15 16"><rect x="1" y=".8" width="8.6" height="5.6" fill="#dfe8f6" stroke="#5f82c4" stroke-width="1.1"/><path d="M5.2 6.4V9.6M3 12V9.6H11.4V12" fill="none" stroke="#5f82c4" stroke-width="1.1"/><rect x="1.2" y="11.6" width="3.8" height="3.4" fill="#fbe9a0" stroke="#c89a20" stroke-width="1.1"/><rect x="9.6" y="11.6" width="3.8" height="3.4" fill="#fbe9a0" stroke="#c89a20" stroke-width="1.1"/></svg>
<svg style="left:1602.5px;top:286px" width="16" height="3" viewBox="0 0 16 3"><g fill="#9c9386"><rect x="0" y="0" width="2" height="2"/><rect x="4" y="0" width="2" height="2"/><rect x="8" y="0" width="2" height="2"/><rect x="12" y="0" width="2" height="2"/></g></svg>
<svg style="left:1604.7px;top:295.8px" width="9" height="8" viewBox="0 0 9 8"><g fill="none" stroke="#8d8378" stroke-width="1.1"><rect x="3.2" y=".6" width="4.8" height="3.6"/><rect x=".6" y="2.9" width="5.2" height="4.3" fill="#f0f0f0"/></g></svg>
<svg style="left:1603px;top:315px" width="14" height="14" viewBox="0 0 14 14"><rect x=".9" y=".9" width="11.8" height="9.4" rx="1.4" fill="#eaf1fb" stroke="#2f5fb3" stroke-width="1.8"/><path d="M3.2 4H8.4M3.2 6.4H10" stroke="#34479a" stroke-width="1.1"/><path d="M4.6 11.2H9L9.8 12.4H3.8Z" fill="#2f5fb3"/><rect x="1.6" y="12.4" width="10.4" height="1.4" fill="#3f74c6"/></svg>
<svg style="left:1601px;top:338px" width="16" height="12" viewBox="0 0 16 12"><text x="8" y="5.2" font-family="Liberation Sans,sans-serif" font-weight="bold" font-size="7" text-anchor="middle" fill="#3a8ac8" textLength="15.4" lengthAdjust="spacingAndGlyphs">1010</text><text x="8" y="11.4" font-family="Liberation Sans,sans-serif" font-weight="bold" font-size="7" text-anchor="middle" fill="#3a8ac8" textLength="15.4" lengthAdjust="spacingAndGlyphs">0101</text></svg>
<svg style="left:1601px;top:358px" width="15" height="16" viewBox="0 0 15 16"><path d="M.8 1.2H10.6L13.6 2.4V14.8L10.6 14H.8Z" fill="#eef0f4" stroke="#8c97b4" stroke-width="1"/><path d="M.8 8H13.6M10.6 1.2V14" stroke="#8c97b4" stroke-width=".9"/><circle cx="5.8" cy="4.6" r="2.4" fill="#e02a32"/><path d="M3.2 13.6C3.2 10.6 8.4 10.6 8.4 13.6Z" fill="#f6a623"/><circle cx="5.8" cy="10.2" r="1.3" fill="#f6a623"/></svg>
<svg style="left:1602.5px;top:381px" width="16" height="16" viewBox="0 0 16 16"><rect x="1" y="1" width="11.6" height="8.8" rx="1.2" fill="#eaf1fb" stroke="#2f5fb3" stroke-width="1.7"/><path d="M3.2 4H8.6M3.2 6.2H7" stroke="#34479a" stroke-width="1"/><rect x="2" y="11.4" width="8" height="1.4" fill="#3f74c6"/><g stroke="#1f5e3a" stroke-width="1" fill="none"><path d="M7 8.4L9.4 10M6.8 12L9 11.6M8.2 15.2L9.8 13.4M13.6 6.4L12.6 8.6M15.8 10L13.8 10.6"/></g><ellipse cx="11.8" cy="11.4" rx="3" ry="3.8" fill="#8fc28a" stroke="#2c7a4a" stroke-width="1" transform="rotate(-35 11.8 11.4)"/></svg>
<svg style="left:1601.6px;top:402.5px" width="15" height="16" viewBox="0 0 15 16"><path d="M.8 2.2C.8 1.2 1.4 .8 2.4 .8H9.6L10.6 2.4V15.2H.8Z" fill="#2f5a9c"/><path d="M2.2 4.4H7.6M2.2 6.8H5.4" stroke="#cfe0f4" stroke-width="1.1"/><circle cx="10.4" cy="10.4" r="4" fill="#2f8cf0" stroke="#5aa6f6" stroke-width=".8"/><path d="M10.4 8.2V10.6H12" stroke="#fff" stroke-width="1" fill="none"/></svg>
<svg style="left:1602px;top:425.5px" width="15" height="13" viewBox="0 0 15 13"><rect x=".8" y=".8" width="12.6" height="11" fill="#fbfcfe" stroke="#3f5f9a" stroke-width="1.1"/><rect x="1.3" y="1.3" width="11.6" height="1.8" fill="#8fa6d2"/><path d="M.8 3.6H13.4M.8 6.2H13.4M.8 8.8H13.4M4.8 3.4V11.8" stroke="#5874a8" stroke-width=".9"/></svg>
<svg style="left:1602.5px;top:447.5px" width="13" height="11" viewBox="0 0 13 11"><path d="M.4 1.2H12.4M.4 5.4H12.4M.4 9.6H12.4" stroke="#1f62a0" stroke-width="1.8"/></svg>
<svg style="left:1596.6px;top:1022.6px" width="16" height="17" viewBox="0 0 16 17"><g fill="#d9efe0" stroke="#9a938a" stroke-width=".9"><path d="M.6 6.6V.8H10.8V2.6"/><path d="M2.6 8.6V2.8H12.8V4.6"/><rect x="4.6" y="4.8" width="10.2" height="6.2"/></g><path d="M1 1.7H10.4M3 3.7H12.4" stroke="#9fd8b4" stroke-width="1.3"/><path d="M5 5.8H14.4" stroke="#4fb357" stroke-width="1.5"/><circle cx="11" cy="11.9" r="4.1" fill="#d9534f"/><path d="M9.2 9.9L12.8 13.9M12.8 9.9L9.2 13.9" stroke="#fff" stroke-width="1.4"/></svg>
</body></html>
